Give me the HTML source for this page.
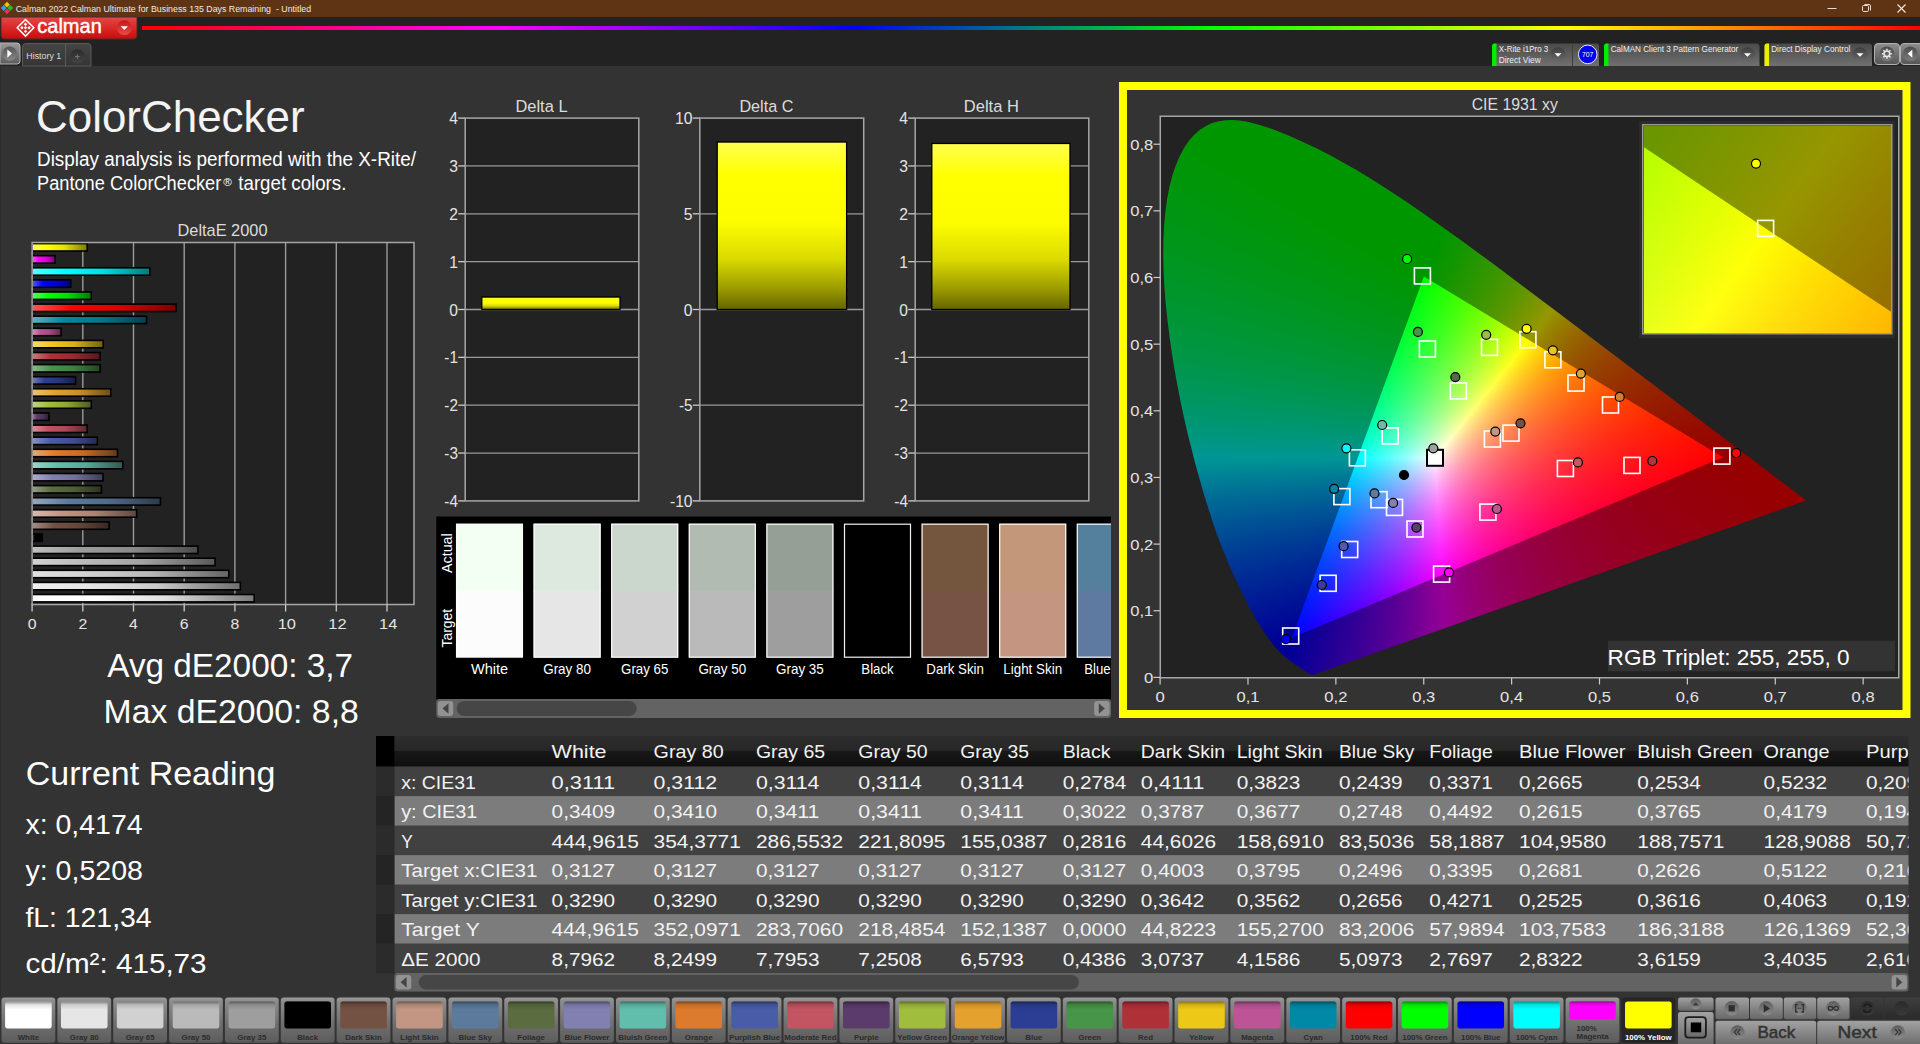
<!DOCTYPE html>
<html lang="en"><head><meta charset="utf-8"><title>Calman 2022 Calman Ultimate for Business - ColorChecker</title>
<style>
html,body{margin:0;padding:0}
body{width:1920px;height:1044px;overflow:hidden;background:#333;position:relative;font-family:"Liberation Sans",sans-serif}
#ov{position:absolute;left:0;top:0;font-family:"Liberation Sans",sans-serif}
text{white-space:pre}
.cr{background:conic-gradient(from 0deg at 130.96px 520.86px,#000000 0deg,#000000 20.1deg,#250000 23.8deg,#4a0000 27.1deg,#6f0000 30deg,#940000 32.6deg,#ba0000 34.9deg,#e00000 37deg,#ff0000 38.5deg,#ff0000 200deg,#000000 200.1deg,#000000 360deg),conic-gradient(from 0deg at 262.93px 159.57px,#000000 0deg,#000000 20deg,#ff0000 20.1deg,#ff0000 176.5deg,#cb0000 180.6deg,#940000 185.3deg,#5a0000 190.8deg,#180000 197.5deg,#000000 200.1deg,#000000 360deg)}
.cg{background:conic-gradient(from 0deg at 130.96px 520.86px,#00ff00 0deg,#00ff00 38.5deg,#00e100 40deg,#00c400 41.7deg,#00a800 43.6deg,#008d00 45.8deg,#007300 48.3deg,#005a00 51.2deg,#004100 54.6deg,#002800 58.7deg,#001000 63.6deg,#000000 67.4deg,#000000 247.2deg,#00ff00 247.3deg,#00ff00 360deg),conic-gradient(from 0deg at 562.05px 340.21px,#00ff00 0deg,#00ff00 67.2deg,#000000 67.3deg,#000000 247.3deg,#002500 251.9deg,#004900 255.9deg,#006d00 259.4deg,#009100 262.5deg,#00b600 265.3deg,#00dc00 267.8deg,#00ff00 269.9deg,#00ff00 360deg)}
.cb{background:conic-gradient(from 0deg at 262.93px 159.57px,#000000 0deg,#000001 121.4deg,#000020 134.7deg,#00003a 144deg,#000053 151.2deg,#00006b 157deg,#000083 161.8deg,#00009b 165.8deg,#0000b4 169.2deg,#0000ce 172.1deg,#0000e8 174.6deg,#0000ff 176.5deg,#0000ff 301.1deg,#000000 301.2deg,#000000 360deg),conic-gradient(from 0deg at 562.05px 340.21px,#000000 0deg,#000000 121.1deg,#0000ff 121.2deg,#0000fe 269.9deg,#0000e0 271.7deg,#0000c2 273.8deg,#0000a5 276.2deg,#000088 278.9deg,#00006d 282deg,#000052 285.6deg,#000036 289.9deg,#00001b 295deg,#000000 301.1deg,#000000 360deg)}
.cl{position:absolute;inset:0;mix-blend-mode:screen;background-blend-mode:darken}
.cw{position:absolute;isolation:isolate;background:#000;overflow:hidden}
.dim{position:absolute;inset:0;background:rgba(0,0,0,.412)}
.ir{background:conic-gradient(from 0deg at -1209.28px 1951.74px,#000000 0deg,#000000 18.3deg,#1f0000 21.3deg,#450000 24.5deg,#6b0000 27.4deg,#920000 30deg,#b90000 32.3deg,#e10000 34.4deg,#ff0000 35.8deg,#ff0000 198.3deg,#000000 198.4deg,#000000 360deg),conic-gradient(from 0deg at -466.78px -289.26px,#000000 0deg,#000000 18.3deg,#ff0000 18.4deg,#ff0000 176.8deg,#cb0000 180.5deg,#960000 184.7deg,#5e0000 189.5deg,#200000 195.2deg,#000000 198.3deg,#000000 360deg)}
.ig{background:conic-gradient(from 0deg at -1209.28px 1951.74px,#00ff00 0deg,#00ff00 35.8deg,#00df00 37.4deg,#00c200 39.1deg,#00a600 41deg,#008b00 43.2deg,#007100 45.7deg,#005800 48.6deg,#004000 52deg,#002800 56.1deg,#001100 61deg,#000000 65.3deg,#000000 245.2deg,#00ff00 245.3deg,#00ff00 360deg),conic-gradient(from 0deg at 1216.22px 831.24px,#00ff00 0deg,#00ff00 65.2deg,#000000 65.3deg,#000000 245.2deg,#002600 250.3deg,#004b00 254.8deg,#007000 258.7deg,#009500 262.1deg,#00ba00 265.1deg,#00df00 267.8deg,#00ff00 269.9deg,#00ff00 360deg)}
.ib{background:conic-gradient(from 0deg at -466.78px -289.26px,#000000 0deg,#000001 123.9deg,#00001c 136.1deg,#000035 144.9deg,#00004c 151.8deg,#000063 157.4deg,#00007b 162deg,#000092 165.8deg,#0000ab 169.1deg,#0000c4 171.9deg,#0000de 174.3deg,#0000f9 176.4deg,#0000ff 176.8deg,#0000ff 303.6deg,#000000 303.7deg,#000000 360deg),conic-gradient(from 0deg at 1216.22px 831.24px,#000000 0deg,#000000 123.6deg,#0000ff 123.7deg,#0000ff 269.8deg,#0000fd 270deg,#0000dd 272.1deg,#0000c0 274.4deg,#0000a2 277.1deg,#000085 280.2deg,#000069 283.7deg,#00004d 287.8deg,#000031 292.7deg,#000015 298.5deg,#000000 303.7deg,#000000 360deg)}
</style></head><body>
<div id="cieplot" style="position:absolute;left:1160px;top:116px;width:739px;height:562px;background:#222"></div>
<div class="cw" style="left:1161px;top:117px;width:738px;height:561px;clip-path:polygon(152.18px 557.68px,150.21px 557.73px,148.12px 556.72px,133.95px 547.25px,128.26px 543.18px,124.28px 540px,119.85px 535.98px,116.46px 532.44px,112.56px 527.92px,108.19px 522.33px,103.43px 515.62px,95.42px 502.9px,86.21px 486.06px,75.61px 464.45px,67.72px 446.98px,59.44px 426.71px,55.3px 415.5px,51.18px 403.6px,43.02px 377.68px,34.86px 348.92px,26.94px 317.74px,23.19px 301.46px,19.64px 284.88px,16.34px 268.12px,13.31px 251.26px,10.6px 234.37px,8.22px 217.51px,6.19px 200.77px,4.53px 184.28px,3.29px 168.19px,2.5px 152.58px,2.2px 137.49px,2.39px 122.89px,3.09px 108.79px,4.29px 95.26px,6.03px 82.4px,8.33px 70.31px,11.2px 59.09px,14.63px 48.77px,18.57px 39.39px,22.99px 31.05px,27.87px 23.8px,33.18px 17.72px,38.88px 12.79px,44.9px 8.93px,51.19px 6.07px,57.69px 4.17px,64.37px 3.15px,71.19px 2.95px,78.13px 3.49px,85.16px 4.62px,92.27px 6.24px,99.43px 8.23px,106.64px 10.53px,113.85px 13.1px,128.13px 18.81px,141.99px 24.93px,155.47px 31.32px,168.69px 38.05px,181.72px 45.13px,194.6px 52.51px,207.4px 60.2px,220.14px 68.18px,245.45px 84.82px,270.64px 102.23px,302.09px 124.76px,333.52px 147.86px,401.97px 199.15px,645.35px 383.49px)"><div class="cl cr"></div><div class="cl cg"></div><div class="cl cb"></div><div class="dim"></div></div>
<div class="cw" style="left:1161px;top:117px;width:738px;height:561px;clip-path:polygon(562.05px 340.21px,262.93px 159.57px,130.96px 520.86px)"><div class="cl cr"></div><div class="cl cg"></div><div class="cl cb"></div></div>
<div style="position:absolute;left:1639px;top:120.5px;width:255.5px;height:217px;background:#2c2c2c"></div>
<div class="cw" style="left:1643.5px;top:125.5px;width:247.5px;height:207.5px"><div class="cl ir"></div><div class="cl ig"></div><div class="cl ib"></div><div class="dim" style="clip-path:polygon(0px 0px,247.5px 0px,247.5px 186.3px,0px 21.52px)"></div></div>
<svg id="ov" width="1920" height="1044" viewBox="0 0 1920 1044">
<defs><linearGradient id="g1" x1="0" y1="0" x2="0" y2="1"><stop offset="0" stop-color="#e44848"/><stop offset="0.45" stop-color="#dc2a2a"/><stop offset="1" stop-color="#c60d0d"/></linearGradient><linearGradient id="g2" x1="0" y1="0" x2="0" y2="1"><stop offset="0" stop-color="#c41818"/><stop offset="1" stop-color="#e84a4a"/></linearGradient><linearGradient id="g3" x1="0" y1="0" x2="1" y2="0"><stop offset="0" stop-color="#f00"/><stop offset="0.2" stop-color="#f0f"/><stop offset="0.4" stop-color="#00f"/><stop offset="0.6" stop-color="#0f0"/><stop offset="0.8" stop-color="#ff0"/><stop offset="1" stop-color="#f00"/></linearGradient><linearGradient id="g4" x1="0" y1="0" x2="0" y2="1"><stop offset="0" stop-color="#9a9a9a"/><stop offset="1" stop-color="#5c5c5c"/></linearGradient><linearGradient id="g5" x1="0" y1="0" x2="0" y2="1"><stop offset="0" stop-color="#555"/><stop offset="1" stop-color="#888"/></linearGradient><linearGradient id="g6" x1="0" y1="0" x2="0" y2="1"><stop offset="0" stop-color="#454545"/><stop offset="1" stop-color="#353535"/></linearGradient><linearGradient id="g7" x1="0" y1="0" x2="0" y2="1"><stop offset="0" stop-color="#2c2c2c"/><stop offset="1" stop-color="#444"/></linearGradient><linearGradient id="g8" x1="0" y1="0" x2="0" y2="1"><stop offset="0" stop-color="#4a4a4a"/><stop offset="1" stop-color="#707070"/></linearGradient><linearGradient id="g9" x1="0" y1="0" x2="0" y2="1"><stop offset="0" stop-color="#3e3e3e"/><stop offset="1" stop-color="#6a6a6a"/></linearGradient><linearGradient id="g10" x1="0" y1="0" x2="0" y2="1"><stop offset="0" stop-color="#4a4a4a"/><stop offset="1" stop-color="#707070"/></linearGradient><linearGradient id="g11" x1="0" y1="0" x2="0" y2="1"><stop offset="0" stop-color="#3e3e3e"/><stop offset="1" stop-color="#6a6a6a"/></linearGradient><linearGradient id="g12" x1="0" y1="0" x2="0" y2="1"><stop offset="0" stop-color="#4a4a4a"/><stop offset="1" stop-color="#707070"/></linearGradient><linearGradient id="g13" x1="0" y1="0" x2="0" y2="1"><stop offset="0" stop-color="#3e3e3e"/><stop offset="1" stop-color="#6a6a6a"/></linearGradient><linearGradient id="g14" x1="0" y1="0" x2="0" y2="1"><stop offset="0" stop-color="#8e8e8e"/><stop offset="1" stop-color="#555"/></linearGradient><linearGradient id="g15" x1="0" y1="0" x2="0" y2="1"><stop offset="0" stop-color="#4c4c4c"/><stop offset="1" stop-color="#7c7c7c"/></linearGradient><linearGradient id="g16" x1="0" y1="0" x2="1" y2="0"><stop offset="0" stop-color="#ffff59"/><stop offset="0.28" stop-color="#ffff00"/><stop offset="0.6" stop-color="#e0e000"/><stop offset="1" stop-color="#7a7a00"/></linearGradient><linearGradient id="g17" x1="0" y1="0" x2="1" y2="0"><stop offset="0" stop-color="#ff59ff"/><stop offset="0.28" stop-color="#ff00ff"/><stop offset="0.6" stop-color="#e000e0"/><stop offset="1" stop-color="#7a007a"/></linearGradient><linearGradient id="g18" x1="0" y1="0" x2="1" y2="0"><stop offset="0" stop-color="#59ffff"/><stop offset="0.28" stop-color="#00ffff"/><stop offset="0.6" stop-color="#00e0e0"/><stop offset="1" stop-color="#007a7a"/></linearGradient><linearGradient id="g19" x1="0" y1="0" x2="1" y2="0"><stop offset="0" stop-color="#5959ff"/><stop offset="0.28" stop-color="#0000ff"/><stop offset="0.6" stop-color="#0000e0"/><stop offset="1" stop-color="#00007a"/></linearGradient><linearGradient id="g20" x1="0" y1="0" x2="1" y2="0"><stop offset="0" stop-color="#59ff59"/><stop offset="0.28" stop-color="#00ff00"/><stop offset="0.6" stop-color="#00e000"/><stop offset="1" stop-color="#007a00"/></linearGradient><linearGradient id="g21" x1="0" y1="0" x2="1" y2="0"><stop offset="0" stop-color="#ff5959"/><stop offset="0.28" stop-color="#ff0000"/><stop offset="0.6" stop-color="#e00000"/><stop offset="1" stop-color="#7a0000"/></linearGradient><linearGradient id="g22" x1="0" y1="0" x2="1" y2="0"><stop offset="0" stop-color="#5eb0c2"/><stop offset="0.28" stop-color="#0885a1"/><stop offset="0.6" stop-color="#07758e"/><stop offset="1" stop-color="#04404d"/></linearGradient><linearGradient id="g23" x1="0" y1="0" x2="1" y2="0"><stop offset="0" stop-color="#d391ba"/><stop offset="0.28" stop-color="#bb5695"/><stop offset="0.6" stop-color="#a54c83"/><stop offset="1" stop-color="#5a2948"/></linearGradient><linearGradient id="g24" x1="0" y1="0" x2="1" y2="0"><stop offset="0" stop-color="#f4db6d"/><stop offset="0.28" stop-color="#eec81f"/><stop offset="0.6" stop-color="#d1b01b"/><stop offset="1" stop-color="#72600f"/></linearGradient><linearGradient id="g25" x1="0" y1="0" x2="1" y2="0"><stop offset="0" stop-color="#cc787e"/><stop offset="0.28" stop-color="#b03038"/><stop offset="0.6" stop-color="#9b2a31"/><stop offset="1" stop-color="#54171b"/></linearGradient><linearGradient id="g26" x1="0" y1="0" x2="1" y2="0"><stop offset="0" stop-color="#87b989"/><stop offset="0.28" stop-color="#469449"/><stop offset="0.6" stop-color="#3e8240"/><stop offset="1" stop-color="#224723"/></linearGradient><linearGradient id="g27" x1="0" y1="0" x2="1" y2="0"><stop offset="0" stop-color="#7582b9"/><stop offset="0.28" stop-color="#2b3e93"/><stop offset="0.6" stop-color="#263781"/><stop offset="1" stop-color="#151e47"/></linearGradient><linearGradient id="g28" x1="0" y1="0" x2="1" y2="0"><stop offset="0" stop-color="#eec277"/><stop offset="0.28" stop-color="#e5a12e"/><stop offset="0.6" stop-color="#ca8e28"/><stop offset="1" stop-color="#6e4d16"/></linearGradient><linearGradient id="g29" x1="0" y1="0" x2="1" y2="0"><stop offset="0" stop-color="#c1d482"/><stop offset="0.28" stop-color="#a0bd3e"/><stop offset="0.6" stop-color="#8da637"/><stop offset="1" stop-color="#4d5b1e"/></linearGradient><linearGradient id="g30" x1="0" y1="0" x2="1" y2="0"><stop offset="0" stop-color="#94809f"/><stop offset="0.28" stop-color="#5b3b6b"/><stop offset="0.6" stop-color="#50345e"/><stop offset="1" stop-color="#2c1c33"/></linearGradient><linearGradient id="g31" x1="0" y1="0" x2="1" y2="0"><stop offset="0" stop-color="#d89099"/><stop offset="0.28" stop-color="#c35462"/><stop offset="0.6" stop-color="#ac4a56"/><stop offset="1" stop-color="#5e282f"/></linearGradient><linearGradient id="g32" x1="0" y1="0" x2="1" y2="0"><stop offset="0" stop-color="#8895c6"/><stop offset="0.28" stop-color="#485ca8"/><stop offset="0.6" stop-color="#3f5194"/><stop offset="1" stop-color="#232c51"/></linearGradient><linearGradient id="g33" x1="0" y1="0" x2="1" y2="0"><stop offset="0" stop-color="#e8a976"/><stop offset="0.28" stop-color="#dc7b2d"/><stop offset="0.6" stop-color="#c26c28"/><stop offset="1" stop-color="#6a3b16"/></linearGradient><linearGradient id="g34" x1="0" y1="0" x2="1" y2="0"><stop offset="0" stop-color="#99d5c9"/><stop offset="0.28" stop-color="#62beac"/><stop offset="0.6" stop-color="#56a797"/><stop offset="1" stop-color="#2f5b53"/></linearGradient><linearGradient id="g35" x1="0" y1="0" x2="1" y2="0"><stop offset="0" stop-color="#aeaccc"/><stop offset="0.28" stop-color="#8280b0"/><stop offset="0.6" stop-color="#72719b"/><stop offset="1" stop-color="#3e3d54"/></linearGradient><linearGradient id="g36" x1="0" y1="0" x2="1" y2="0"><stop offset="0" stop-color="#949f83"/><stop offset="0.28" stop-color="#5a6c40"/><stop offset="0.6" stop-color="#4f5f38"/><stop offset="1" stop-color="#2b341f"/></linearGradient><linearGradient id="g37" x1="0" y1="0" x2="1" y2="0"><stop offset="0" stop-color="#94a9bf"/><stop offset="0.28" stop-color="#5b7a9c"/><stop offset="0.6" stop-color="#506b89"/><stop offset="1" stop-color="#2c3b4b"/></linearGradient><linearGradient id="g38" x1="0" y1="0" x2="1" y2="0"><stop offset="0" stop-color="#d7bbae"/><stop offset="0.28" stop-color="#c29682"/><stop offset="0.6" stop-color="#ab8472"/><stop offset="1" stop-color="#5d483e"/></linearGradient><linearGradient id="g39" x1="0" y1="0" x2="1" y2="0"><stop offset="0" stop-color="#a48f85"/><stop offset="0.28" stop-color="#735244"/><stop offset="0.6" stop-color="#65483c"/><stop offset="1" stop-color="#372721"/></linearGradient><linearGradient id="g40" x1="0" y1="0" x2="1" y2="0"><stop offset="0" stop-color="#595959"/><stop offset="0.28" stop-color="#000000"/><stop offset="0.6" stop-color="#000000"/><stop offset="1" stop-color="#000000"/></linearGradient><linearGradient id="g41" x1="0" y1="0" x2="1" y2="0"><stop offset="0" stop-color="#c0c0c0"/><stop offset="0.28" stop-color="#9e9e9e"/><stop offset="0.6" stop-color="#8b8b8b"/><stop offset="1" stop-color="#4c4c4c"/></linearGradient><linearGradient id="g42" x1="0" y1="0" x2="1" y2="0"><stop offset="0" stop-color="#d2d2d2"/><stop offset="0.28" stop-color="#bababa"/><stop offset="0.6" stop-color="#a4a4a4"/><stop offset="1" stop-color="#595959"/></linearGradient><linearGradient id="g43" x1="0" y1="0" x2="1" y2="0"><stop offset="0" stop-color="#e1e1e1"/><stop offset="0.28" stop-color="#d1d1d1"/><stop offset="0.6" stop-color="#b8b8b8"/><stop offset="1" stop-color="#646464"/></linearGradient><linearGradient id="g44" x1="0" y1="0" x2="1" y2="0"><stop offset="0" stop-color="#efefef"/><stop offset="0.28" stop-color="#e6e6e6"/><stop offset="0.6" stop-color="#cacaca"/><stop offset="1" stop-color="#6e6e6e"/></linearGradient><linearGradient id="g45" x1="0" y1="0" x2="1" y2="0"><stop offset="0" stop-color="#ffffff"/><stop offset="0.28" stop-color="#ffffff"/><stop offset="0.6" stop-color="#e0e0e0"/><stop offset="1" stop-color="#7a7a7a"/></linearGradient><linearGradient id="g46" x1="0" y1="0" x2="0" y2="1"><stop offset="0" stop-color="#ffff50"/><stop offset="0.2" stop-color="#ffff00"/><stop offset="0.48" stop-color="#fdfd00"/><stop offset="0.7" stop-color="#dada00"/><stop offset="0.88" stop-color="#999900"/><stop offset="1" stop-color="#646400"/></linearGradient><linearGradient id="g47" x1="0" y1="0" x2="0" y2="1"><stop offset="0" stop-color="#ffff50"/><stop offset="0.2" stop-color="#ffff00"/><stop offset="0.48" stop-color="#fdfd00"/><stop offset="0.7" stop-color="#dada00"/><stop offset="0.88" stop-color="#999900"/><stop offset="1" stop-color="#646400"/></linearGradient><linearGradient id="g48" x1="0" y1="0" x2="0" y2="1"><stop offset="0" stop-color="#ffff50"/><stop offset="0.2" stop-color="#ffff00"/><stop offset="0.48" stop-color="#fdfd00"/><stop offset="0.7" stop-color="#dada00"/><stop offset="0.88" stop-color="#999900"/><stop offset="1" stop-color="#646400"/></linearGradient><linearGradient id="g49" x1="0" y1="0" x2="0" y2="1"><stop offset="0" stop-color="#2e2e2e"/><stop offset="0.5" stop-color="#262626"/><stop offset="0.5" stop-color="#181818"/><stop offset="1" stop-color="#0e0e0e"/></linearGradient><linearGradient id="g50" x1="0" y1="0" x2="0" y2="1"><stop offset="0" stop-color="#9c9c9c"/><stop offset="0.08" stop-color="#8c8c8c"/><stop offset="0.6" stop-color="#6e6e6e"/><stop offset="1" stop-color="#5c5c5c"/></linearGradient><linearGradient id="g51" x1="0" y1="0" x2="0" y2="1"><stop offset="0" stop-color="#000" stop-opacity="0.45"/><stop offset="0.12" stop-color="#000" stop-opacity="0.12"/><stop offset="0.3" stop-color="#000" stop-opacity="0"/></linearGradient><linearGradient id="g52" x1="0" y1="0" x2="0" y2="1"><stop offset="0" stop-color="#a2a2a2"/><stop offset="1" stop-color="#686868"/></linearGradient><linearGradient id="g53" x1="0" y1="0" x2="0" y2="1"><stop offset="0" stop-color="#3e3e3e"/><stop offset="1" stop-color="#2a2a2a"/></linearGradient><linearGradient id="g54" x1="0" y1="0" x2="0" y2="1"><stop offset="0" stop-color="#5e5e5e"/><stop offset="1" stop-color="#8a8a8a"/></linearGradient><linearGradient id="g55" x1="0" y1="0" x2="0" y2="1"><stop offset="0" stop-color="#2a2a2a"/><stop offset="1" stop-color="#3a3a3a"/></linearGradient></defs>
<rect x="0" y="0" width="1920" height="17" fill="#5e3414"/>
<g transform="translate(7,8)"><path d="M0-6.2 2.9-3.3 0-.4-2.9-3.3z" fill="#f2c500"/><path d="M-6.2 0-3.3-2.9-.4 0-3.3 2.9z" fill="#2aa6e8"/><path d="M6.2 0 3.3-2.9 .4 0 3.3 2.9z" fill="#1fc12a"/><path d="M0 6.2 2.9 3.3 0 .4-2.9 3.3z" fill="#e8306a"/></g>
<text x="15.7" y="11.8" font-size="9.6" fill="#f1e9e2" textLength="295.5" lengthAdjust="spacingAndGlyphs">Calman 2022 Calman Ultimate for Business 135 Days Remaining  - Untitled</text>
<line x1="1827.5" y1="8.5" x2="1836.5" y2="8.5" stroke="#e6ddd6" stroke-width="1"/>
<rect x="1862.5" y="5.5" width="6" height="6" rx="1.2" fill="none" stroke="#e6ddd6"/><path d="M1864.5 4.5h4.5a1.5 1.5 0 0 1 1.5 1.5v4.5" fill="none" stroke="#e6ddd6"/>
<path d="M1897.5 4.5l8 8m0-8l-8 8" stroke="#f1e9e2" stroke-width="1.1" fill="none"/>
<rect x="0" y="17" width="1920" height="49" fill="#222"/>
<rect x="0" y="66" width="1" height="930" fill="#2c2c2c"/>
<path d="M1 17h136v18.5a3.5 3.5 0 0 1-3.5 3.5h-129a3.5 3.5 0 0 1-3.5-3.5z" fill="url(#g1)" stroke="#4a2a2a" stroke-width="1"/>
<g transform="translate(25.5,27.8)" fill="none" stroke="#fff" stroke-width="1.5"><path d="M0-8.3 8.3 0 0 8.3-8.3 0z"/></g><g transform="translate(25.5,27.8)" fill="#fff"><path d="M0 -5.3 l1.7 1.7 -1.7 1.7 -1.7 -1.7z"/><path d="M-3.6 -1.7 l1.7 1.7 -1.7 1.7 -1.7 -1.7z"/><path d="M3.6 -1.7 l1.7 1.7 -1.7 1.7 -1.7 -1.7z"/><path d="M0 1.9 l1.7 1.7 -1.7 1.7 -1.7 -1.7z"/><path d="M0 -1.7 l1.7 1.7 -1.7 1.7 -1.7 -1.7z"/></g>
<text x="37.3" y="33.3" font-size="20.2" fill="#fff" textLength="64.5" lengthAdjust="spacingAndGlyphs" stroke="#fff" stroke-width=".45">calman</text>
<circle cx="124.3" cy="27.7" r="7.4" fill="url(#g2)"/><path d="M120.6 26.2h7.4l-3.7 3.9z" fill="#fff"/>
<rect x="142" y="26" width="1778" height="4" fill="url(#g3)"/>
<path d="M0 43h17a3 3 0 0 1 3 3v15a3 3 0 0 1-3 3h-17z" fill="url(#g4)" stroke="#b4b4b4" stroke-width="1"/>
<circle cx="9.6" cy="53.6" r="7.2" fill="url(#g5)"/><path d="M7.3 49.4v8.4l4.6-4.2z" fill="#fff"/>
<path d="M22.5 66v-19.5a3 3 0 0 1 3-3h62.5a3 3 0 0 1 3 3v19.5z" fill="url(#g6)" stroke="#5a5a5a" stroke-width="1"/>
<line x1="65.5" y1="44" x2="65.5" y2="66" stroke="#5a5a5a" stroke-width="1"/>
<text x="26.3" y="58.6" font-size="9.2" fill="#dcdcdc" textLength="35" lengthAdjust="spacingAndGlyphs">History 1</text>
<circle cx="77.4" cy="56.4" r="7.2" fill="url(#g7)"/><path d="M75 56.6h4.6m-2.3-2.3v4.6" stroke="#7a7a7a" stroke-width="1" fill="none"/>
<path d="M1492 66v-19.5a3 3 0 0 1 3-3h101a3 3 0 0 1 3 3v19.5z" fill="url(#g8)"/>
<path d="M1492 66v-20a2.5 2.5 0 0 1 2.5-2.5h2v22.5z" fill="#0e0"/>
<text x="1498.7" y="52" font-size="8.4" fill="#f0f0f0" textLength="49.5" lengthAdjust="spacingAndGlyphs">X-Rite i1Pro 3</text>
<text x="1498.7" y="63" font-size="8.4" fill="#f0f0f0" textLength="42" lengthAdjust="spacingAndGlyphs">Direct View</text>
<circle cx="1558" cy="54.6" r="7.4" fill="url(#g9)"/><path d="M1554.5 53.2h7l-3.5 3.6z" fill="#fff"/>
<line x1="1572.5" y1="45" x2="1572.5" y2="66" stroke="#3c3c3c" stroke-width="1"/>
<circle cx="1587.7" cy="54.4" r="9.3" fill="#0000f0" stroke="#e8e8ff" stroke-width="1"/>
<text x="1587.7" y="57.4" font-size="8" fill="#fff" text-anchor="middle" textLength="11.5" lengthAdjust="spacingAndGlyphs">707</text>
<path d="M1604 66v-19.5a3 3 0 0 1 3-3h149.5a3 3 0 0 1 3 3v19.5z" fill="url(#g10)"/>
<path d="M1604 66v-20a2.5 2.5 0 0 1 2.5-2.5h2v22.5z" fill="#0e0"/>
<text x="1610.7" y="52" font-size="8.4" fill="#f0f0f0" textLength="127.5" lengthAdjust="spacingAndGlyphs">CalMAN Client 3 Pattern Generator</text>
<circle cx="1747.5" cy="54.6" r="7.4" fill="url(#g11)"/><path d="M1744 53.2h7l-3.5 3.6z" fill="#fff"/>
<path d="M1764.5 66v-19.5a3 3 0 0 1 3-3h101.5a3 3 0 0 1 3 3v19.5z" fill="url(#g12)"/>
<path d="M1764.5 66v-20a2.5 2.5 0 0 1 2.5-2.5h2v22.5z" fill="#ee0"/>
<text x="1771.2" y="52" font-size="8.4" fill="#f0f0f0" textLength="79.2" lengthAdjust="spacingAndGlyphs">Direct Display Control</text>
<circle cx="1860" cy="54.6" r="7.4" fill="url(#g13)"/><path d="M1856.5 53.2h7l-3.5 3.6z" fill="#fff"/>
<rect x="1874.5" y="43.5" width="25" height="21" rx="3.5" fill="url(#g14)" stroke="#b0b0b0"/>
<rect x="1900.5" y="43.5" width="25" height="21" rx="3.5" fill="url(#g14)" stroke="#b0b0b0"/>
<circle cx="1886.9" cy="53.8" r="7.4" fill="url(#g15)"/><circle cx="1910.4" cy="53.8" r="7.4" fill="url(#g15)"/>
<g stroke="#e8e8e8" stroke-width="1.6"><line x1="1890.1" y1="53.8" x2="1891.9" y2="53.8"/><line x1="1889.16" y1="56.06" x2="1890.44" y2="57.34"/><line x1="1886.9" y1="57" x2="1886.9" y2="58.8"/><line x1="1884.64" y1="56.06" x2="1883.36" y2="57.34"/><line x1="1883.7" y1="53.8" x2="1881.9" y2="53.8"/><line x1="1884.64" y1="51.54" x2="1883.36" y2="50.26"/><line x1="1886.9" y1="50.6" x2="1886.9" y2="48.8"/><line x1="1889.16" y1="51.54" x2="1890.44" y2="50.26"/></g><circle cx="1886.9" cy="53.8" r="2.8" fill="none" stroke="#e8e8e8" stroke-width="1.5"/>
<path d="M1912.3 49.8v8l-4.6-4z" fill="#fff"/>
<rect x="1123" y="86" width="783.5" height="628" fill="none" stroke="#ff0" stroke-width="8"/>
<rect x="1160.25" y="116.25" width="738.5" height="561.5" fill="none" stroke="#a6a6a6" stroke-width="1.5"/>
<text x="1514.8" y="110.4" font-size="16.6" fill="#dcdcdc" text-anchor="middle" textLength="86.2" lengthAdjust="spacingAndGlyphs">CIE 1931 xy</text>
<line x1="1153.5" y1="677.4" x2="1160" y2="677.4" stroke="#ccc" stroke-width="1.2"/>
<line x1="1160.1" y1="678" x2="1160.1" y2="684.5" stroke="#ccc" stroke-width="1.2"/>
<text x="1153.3" y="683" font-size="14.6" fill="#e4e4e4" text-anchor="end" textLength="9.3" lengthAdjust="spacingAndGlyphs">0</text>
<text x="1160.1" y="702" font-size="14.6" fill="#e4e4e4" text-anchor="middle" textLength="9.3" lengthAdjust="spacingAndGlyphs">0</text>
<line x1="1153.5" y1="610.75" x2="1160" y2="610.75" stroke="#ccc" stroke-width="1.2"/>
<line x1="1247.98" y1="678" x2="1247.98" y2="684.5" stroke="#ccc" stroke-width="1.2"/>
<text x="1153.3" y="616.35" font-size="14.6" fill="#e4e4e4" text-anchor="end" textLength="23" lengthAdjust="spacingAndGlyphs">0,1</text>
<text x="1247.98" y="702" font-size="14.6" fill="#e4e4e4" text-anchor="middle" textLength="23" lengthAdjust="spacingAndGlyphs">0,1</text>
<line x1="1153.5" y1="544.1" x2="1160" y2="544.1" stroke="#ccc" stroke-width="1.2"/>
<line x1="1335.86" y1="678" x2="1335.86" y2="684.5" stroke="#ccc" stroke-width="1.2"/>
<text x="1153.3" y="549.7" font-size="14.6" fill="#e4e4e4" text-anchor="end" textLength="23" lengthAdjust="spacingAndGlyphs">0,2</text>
<text x="1335.86" y="702" font-size="14.6" fill="#e4e4e4" text-anchor="middle" textLength="23" lengthAdjust="spacingAndGlyphs">0,2</text>
<line x1="1153.5" y1="477.45" x2="1160" y2="477.45" stroke="#ccc" stroke-width="1.2"/>
<line x1="1423.74" y1="678" x2="1423.74" y2="684.5" stroke="#ccc" stroke-width="1.2"/>
<text x="1153.3" y="483.05" font-size="14.6" fill="#e4e4e4" text-anchor="end" textLength="23" lengthAdjust="spacingAndGlyphs">0,3</text>
<text x="1423.74" y="702" font-size="14.6" fill="#e4e4e4" text-anchor="middle" textLength="23" lengthAdjust="spacingAndGlyphs">0,3</text>
<line x1="1153.5" y1="410.8" x2="1160" y2="410.8" stroke="#ccc" stroke-width="1.2"/>
<line x1="1511.62" y1="678" x2="1511.62" y2="684.5" stroke="#ccc" stroke-width="1.2"/>
<text x="1153.3" y="416.4" font-size="14.6" fill="#e4e4e4" text-anchor="end" textLength="23" lengthAdjust="spacingAndGlyphs">0,4</text>
<text x="1511.62" y="702" font-size="14.6" fill="#e4e4e4" text-anchor="middle" textLength="23" lengthAdjust="spacingAndGlyphs">0,4</text>
<line x1="1153.5" y1="344.15" x2="1160" y2="344.15" stroke="#ccc" stroke-width="1.2"/>
<line x1="1599.5" y1="678" x2="1599.5" y2="684.5" stroke="#ccc" stroke-width="1.2"/>
<text x="1153.3" y="349.75" font-size="14.6" fill="#e4e4e4" text-anchor="end" textLength="23" lengthAdjust="spacingAndGlyphs">0,5</text>
<text x="1599.5" y="702" font-size="14.6" fill="#e4e4e4" text-anchor="middle" textLength="23" lengthAdjust="spacingAndGlyphs">0,5</text>
<line x1="1153.5" y1="277.5" x2="1160" y2="277.5" stroke="#ccc" stroke-width="1.2"/>
<line x1="1687.38" y1="678" x2="1687.38" y2="684.5" stroke="#ccc" stroke-width="1.2"/>
<text x="1153.3" y="283.1" font-size="14.6" fill="#e4e4e4" text-anchor="end" textLength="23" lengthAdjust="spacingAndGlyphs">0,6</text>
<text x="1687.38" y="702" font-size="14.6" fill="#e4e4e4" text-anchor="middle" textLength="23" lengthAdjust="spacingAndGlyphs">0,6</text>
<line x1="1153.5" y1="210.85" x2="1160" y2="210.85" stroke="#ccc" stroke-width="1.2"/>
<line x1="1775.26" y1="678" x2="1775.26" y2="684.5" stroke="#ccc" stroke-width="1.2"/>
<text x="1153.3" y="216.45" font-size="14.6" fill="#e4e4e4" text-anchor="end" textLength="23" lengthAdjust="spacingAndGlyphs">0,7</text>
<text x="1775.26" y="702" font-size="14.6" fill="#e4e4e4" text-anchor="middle" textLength="23" lengthAdjust="spacingAndGlyphs">0,7</text>
<line x1="1153.5" y1="144.2" x2="1160" y2="144.2" stroke="#ccc" stroke-width="1.2"/>
<line x1="1863.14" y1="678" x2="1863.14" y2="684.5" stroke="#ccc" stroke-width="1.2"/>
<text x="1153.3" y="149.8" font-size="14.6" fill="#e4e4e4" text-anchor="end" textLength="23" lengthAdjust="spacingAndGlyphs">0,8</text>
<text x="1863.14" y="702" font-size="14.6" fill="#e4e4e4" text-anchor="middle" textLength="23" lengthAdjust="spacingAndGlyphs">0,8</text>
<rect x="1608" y="640.8" width="287" height="30.5" fill="#333"/>
<text x="1607.6" y="664.5" font-size="22.2" fill="#fff" textLength="242" lengthAdjust="spacingAndGlyphs">RGB Triplet: 255, 255, 0</text>
<rect x="1642.75" y="124.75" width="249" height="209" fill="none" stroke="#9a9a9a" stroke-width="1.5"/>
<g fill="none" stroke="#fff" stroke-width="1.6"><rect x="1414.4" y="267.9" width="16" height="16"/><rect x="1419.4" y="341" width="16" height="16"/><rect x="1481.5" y="339.4" width="16" height="16"/><rect x="1519.9" y="331.7" width="16" height="16"/><rect x="1544.9" y="351.8" width="16" height="16"/><rect x="1568" y="375.1" width="16" height="16"/><rect x="1602.5" y="397" width="16" height="16"/><rect x="1450.4" y="382.9" width="16" height="16"/><rect x="1382.2" y="427.9" width="16" height="16"/><rect x="1349.4" y="449.8" width="16" height="16"/><rect x="1333.9" y="488.6" width="16" height="16"/><rect x="1371" y="491.7" width="16" height="16"/><rect x="1386.5" y="499.4" width="16" height="16"/><rect x="1407" y="521" width="16" height="16"/><rect x="1341.7" y="541.5" width="16" height="16"/><rect x="1484.4" y="431" width="16" height="16"/><rect x="1503" y="425.1" width="16" height="16"/><rect x="1479.9" y="504.1" width="16" height="16"/><rect x="1433.6" y="566.1" width="16" height="16"/><rect x="1320.1" y="575.3" width="16" height="16"/><rect x="1282.7" y="628" width="16" height="16"/><rect x="1557.4" y="460.5" width="16" height="16"/><rect x="1624" y="457.4" width="16" height="16"/><rect x="1713.9" y="448.1" width="16" height="16"/></g><rect x="1427" y="449.8" width="16" height="16" fill="#fff" fill-opacity=".85" stroke="#000" stroke-width="2"/><g stroke="#000" stroke-width="1.2"><circle cx="1407.1" cy="259" r="4.5" fill="#00ff00"/><circle cx="1417.9" cy="331.9" r="4.5" fill="#469449"/><circle cx="1486.2" cy="334.8" r="4.5" fill="#9dbc40"/><circle cx="1526.6" cy="328.8" r="4.5" fill="#ffff00"/><circle cx="1552.9" cy="350.3" r="4.5" fill="#e7c71f"/><circle cx="1580.9" cy="373.6" r="4.5" fill="#e0a32e"/><circle cx="1619.7" cy="396.9" r="4.5" fill="#d67e2c"/><circle cx="1455.3" cy="377.1" r="4.5" fill="#576c43"/><circle cx="1382.2" cy="425" r="4.5" fill="#67bdaa"/><circle cx="1346.4" cy="448.3" r="4.5" fill="#00ffff"/><circle cx="1334.1" cy="488.8" r="4.5" fill="#0885a1"/><circle cx="1374.5" cy="493.4" r="4.5" fill="#627a9d"/><circle cx="1393.1" cy="502.9" r="4.5" fill="#8580b1"/><circle cx="1416.4" cy="527.6" r="4.5" fill="#5e3c6c"/><circle cx="1343.6" cy="546.2" r="4.5" fill="#505ba6"/><circle cx="1495.3" cy="431.6" r="4.5" fill="#c29682"/><circle cx="1520.5" cy="423.3" r="4.5" fill="#735244"/><circle cx="1496.9" cy="509" r="4.5" fill="#bb5695"/><circle cx="1449" cy="572.4" r="4.5" fill="#ff00ff"/><circle cx="1321.8" cy="585" r="4.5" fill="#383d96"/><circle cx="1285.9" cy="639.1" r="4.5" fill="#0000ff"/><circle cx="1577.9" cy="462.4" r="4.5" fill="#c15a63"/><circle cx="1652.3" cy="461" r="4.5" fill="#af363c"/><circle cx="1736.2" cy="453" r="4.5" fill="#ff0000"/><circle cx="1404" cy="475" r="4.5" fill="#000"/><circle cx="1433.3" cy="448.3" r="4.5" fill="#a0a0a0"/><rect x="1757.6" y="220.4" width="16" height="16" fill="none" stroke="#fff" stroke-width="1.6"/><circle cx="1756" cy="163.6" r="4.5" fill="#ffff00"/></g>
<text x="36" y="132" font-size="44.5" fill="#f4f4f4" textLength="268.6" lengthAdjust="spacingAndGlyphs">ColorChecker</text>
<text x="37" y="165.5" font-size="20" fill="#fff" textLength="379" lengthAdjust="spacingAndGlyphs">Display analysis is performed with the X-Rite/</text>
<text x="37" y="190" font-size="20" fill="#fff" textLength="184.3" lengthAdjust="spacingAndGlyphs">Pantone ColorChecker</text>
<text x="223.3" y="185.6" font-size="10.5" fill="#fff" textLength="8.6" lengthAdjust="spacingAndGlyphs">®</text>
<text x="238.3" y="190" font-size="20" fill="#fff" textLength="108.1" lengthAdjust="spacingAndGlyphs">target colors.</text>
<text x="222.5" y="236.3" font-size="16.6" fill="#dcdcdc" text-anchor="middle" textLength="90" lengthAdjust="spacingAndGlyphs">DeltaE 2000</text>
<rect x="32.1" y="242.4" width="381.9" height="362.2" fill="#222"/>
<line x1="82.8" y1="242.4" x2="82.8" y2="604.6" stroke="#9a9a9a" stroke-width="1.4"/>
<line x1="133.5" y1="242.4" x2="133.5" y2="604.6" stroke="#9a9a9a" stroke-width="1.4"/>
<line x1="184.2" y1="242.4" x2="184.2" y2="604.6" stroke="#9a9a9a" stroke-width="1.4"/>
<line x1="234.9" y1="242.4" x2="234.9" y2="604.6" stroke="#9a9a9a" stroke-width="1.4"/>
<line x1="285.6" y1="242.4" x2="285.6" y2="604.6" stroke="#9a9a9a" stroke-width="1.4"/>
<line x1="336.3" y1="242.4" x2="336.3" y2="604.6" stroke="#9a9a9a" stroke-width="1.4"/>
<line x1="387" y1="242.4" x2="387" y2="604.6" stroke="#9a9a9a" stroke-width="1.4"/>
<rect x="32.1" y="243.6" width="55.12" height="7.4" fill="url(#g16)" stroke="#000" stroke-width="1.6"/>
<rect x="32.1" y="255.7" width="22.93" height="7.4" fill="url(#g17)" stroke="#000" stroke-width="1.6"/>
<rect x="32.1" y="267.8" width="117.74" height="7.4" fill="url(#g18)" stroke="#000" stroke-width="1.6"/>
<rect x="32.1" y="279.9" width="38.65" height="7.4" fill="url(#g19)" stroke="#000" stroke-width="1.6"/>
<rect x="32.1" y="292" width="59.18" height="7.4" fill="url(#g20)" stroke="#000" stroke-width="1.6"/>
<rect x="32.1" y="304.1" width="143.85" height="7.4" fill="url(#g21)" stroke="#000" stroke-width="1.6"/>
<rect x="32.1" y="316.2" width="114.44" height="7.4" fill="url(#g22)" stroke="#000" stroke-width="1.6"/>
<rect x="32.1" y="328.3" width="29.01" height="7.4" fill="url(#g23)" stroke="#000" stroke-width="1.6"/>
<rect x="32.1" y="340.4" width="71.09" height="7.4" fill="url(#g24)" stroke="#000" stroke-width="1.6"/>
<rect x="32.1" y="352.5" width="68.05" height="7.4" fill="url(#g25)" stroke="#000" stroke-width="1.6"/>
<rect x="32.1" y="364.6" width="68.05" height="7.4" fill="url(#g26)" stroke="#000" stroke-width="1.6"/>
<rect x="32.1" y="376.7" width="43.46" height="7.4" fill="url(#g27)" stroke="#000" stroke-width="1.6"/>
<rect x="32.1" y="388.8" width="78.7" height="7.4" fill="url(#g28)" stroke="#000" stroke-width="1.6"/>
<rect x="32.1" y="400.9" width="59.18" height="7.4" fill="url(#g29)" stroke="#000" stroke-width="1.6"/>
<rect x="32.1" y="413" width="16.85" height="7.4" fill="url(#g30)" stroke="#000" stroke-width="1.6"/>
<rect x="32.1" y="425.1" width="55.12" height="7.4" fill="url(#g31)" stroke="#000" stroke-width="1.6"/>
<rect x="32.1" y="437.2" width="65.26" height="7.4" fill="url(#g32)" stroke="#000" stroke-width="1.6"/>
<rect x="32.1" y="449.3" width="85.38" height="7.4" fill="url(#g33)" stroke="#000" stroke-width="1.6"/>
<rect x="32.1" y="461.4" width="90.76" height="7.4" fill="url(#g34)" stroke="#000" stroke-width="1.6"/>
<rect x="32.1" y="473.5" width="70.9" height="7.4" fill="url(#g35)" stroke="#000" stroke-width="1.6"/>
<rect x="32.1" y="485.6" width="69.31" height="7.4" fill="url(#g36)" stroke="#000" stroke-width="1.6"/>
<rect x="32.1" y="497.7" width="128.32" height="7.4" fill="url(#g37)" stroke="#000" stroke-width="1.6"/>
<rect x="32.1" y="509.8" width="104.52" height="7.4" fill="url(#g38)" stroke="#000" stroke-width="1.6"/>
<rect x="32.1" y="521.9" width="77.02" height="7.4" fill="url(#g39)" stroke="#000" stroke-width="1.6"/>
<rect x="32.1" y="534" width="10.22" height="7.4" fill="url(#g40)" stroke="#000" stroke-width="1.6"/>
<rect x="32.1" y="546.1" width="165.89" height="7.4" fill="url(#g41)" stroke="#000" stroke-width="1.6"/>
<rect x="32.1" y="558.2" width="182.91" height="7.4" fill="url(#g42)" stroke="#000" stroke-width="1.6"/>
<rect x="32.1" y="570.3" width="196.71" height="7.4" fill="url(#g43)" stroke="#000" stroke-width="1.6"/>
<rect x="32.1" y="582.4" width="208.23" height="7.4" fill="url(#g44)" stroke="#000" stroke-width="1.6"/>
<rect x="32.1" y="594.5" width="222.08" height="7.4" fill="url(#g45)" stroke="#000" stroke-width="1.6"/>
<path d="M414 604.6V242.4H32.1V604.6" fill="none" stroke="#a6a6a6" stroke-width="1.5"/>
<line x1="31.4" y1="604.6" x2="414.7" y2="604.6" stroke="#a6a6a6" stroke-width="1.5"/>
<line x1="32.1" y1="604.6" x2="32.1" y2="611.5" stroke="#ccc" stroke-width="1.3"/>
<text x="32.1" y="629.3" font-size="15.5" fill="#e4e4e4" text-anchor="middle" textLength="8.8" lengthAdjust="spacingAndGlyphs">0</text>
<line x1="82.8" y1="604.6" x2="82.8" y2="611.5" stroke="#ccc" stroke-width="1.3"/>
<text x="82.8" y="629.3" font-size="15.5" fill="#e4e4e4" text-anchor="middle" textLength="8.8" lengthAdjust="spacingAndGlyphs">2</text>
<line x1="133.5" y1="604.6" x2="133.5" y2="611.5" stroke="#ccc" stroke-width="1.3"/>
<text x="133.5" y="629.3" font-size="15.5" fill="#e4e4e4" text-anchor="middle" textLength="8.8" lengthAdjust="spacingAndGlyphs">4</text>
<line x1="184.2" y1="604.6" x2="184.2" y2="611.5" stroke="#ccc" stroke-width="1.3"/>
<text x="184.2" y="629.3" font-size="15.5" fill="#e4e4e4" text-anchor="middle" textLength="8.8" lengthAdjust="spacingAndGlyphs">6</text>
<line x1="234.9" y1="604.6" x2="234.9" y2="611.5" stroke="#ccc" stroke-width="1.3"/>
<text x="234.9" y="629.3" font-size="15.5" fill="#e4e4e4" text-anchor="middle" textLength="8.8" lengthAdjust="spacingAndGlyphs">8</text>
<line x1="285.6" y1="604.6" x2="285.6" y2="611.5" stroke="#ccc" stroke-width="1.3"/>
<text x="286.8" y="629.3" font-size="15.5" fill="#e4e4e4" text-anchor="middle" textLength="18.3" lengthAdjust="spacingAndGlyphs">10</text>
<line x1="336.3" y1="604.6" x2="336.3" y2="611.5" stroke="#ccc" stroke-width="1.3"/>
<text x="337.5" y="629.3" font-size="15.5" fill="#e4e4e4" text-anchor="middle" textLength="18.3" lengthAdjust="spacingAndGlyphs">12</text>
<line x1="387" y1="604.6" x2="387" y2="611.5" stroke="#ccc" stroke-width="1.3"/>
<text x="388.2" y="629.3" font-size="15.5" fill="#e4e4e4" text-anchor="middle" textLength="18.3" lengthAdjust="spacingAndGlyphs">14</text>
<text x="107.3" y="676.6" font-size="33" fill="#fff" textLength="245.7" lengthAdjust="spacingAndGlyphs">Avg dE2000: 3,7</text>
<text x="103.5" y="722.9" font-size="33" fill="#fff" textLength="255.3" lengthAdjust="spacingAndGlyphs">Max dE2000: 8,8</text>
<text x="25.8" y="784.5" font-size="33" fill="#fff" textLength="249.5" lengthAdjust="spacingAndGlyphs">Current Reading</text>
<text x="25.4" y="834.3" font-size="28.5" fill="#fff" textLength="117.2" lengthAdjust="spacingAndGlyphs">x: 0,4174</text>
<text x="25.4" y="880" font-size="28.5" fill="#fff" textLength="117.6" lengthAdjust="spacingAndGlyphs">y: 0,5208</text>
<text x="25.4" y="926.8" font-size="28.5" fill="#fff" textLength="126.2" lengthAdjust="spacingAndGlyphs">fL: 121,34</text>
<text x="25.4" y="973.4" font-size="28.5" fill="#fff" textLength="181.2" lengthAdjust="spacingAndGlyphs">cd/m²: 415,73</text>
<rect x="465.2" y="118.1" width="173.6" height="382.8" fill="#222"/>
<line x1="458.2" y1="118.1" x2="465.2" y2="118.1" stroke="#ccc" stroke-width="1.3"/>
<text x="457.9" y="124.2" font-size="15.8" fill="#e4e4e4" text-anchor="end" textLength="8.7" lengthAdjust="spacingAndGlyphs">4</text>
<line x1="465.2" y1="165.95" x2="638.8" y2="165.95" stroke="#9a9a9a" stroke-width="1.3"/>
<line x1="458.2" y1="165.95" x2="465.2" y2="165.95" stroke="#ccc" stroke-width="1.3"/>
<text x="457.9" y="172.05" font-size="15.8" fill="#e4e4e4" text-anchor="end" textLength="8.7" lengthAdjust="spacingAndGlyphs">3</text>
<line x1="465.2" y1="213.8" x2="638.8" y2="213.8" stroke="#9a9a9a" stroke-width="1.3"/>
<line x1="458.2" y1="213.8" x2="465.2" y2="213.8" stroke="#ccc" stroke-width="1.3"/>
<text x="457.9" y="219.9" font-size="15.8" fill="#e4e4e4" text-anchor="end" textLength="8.7" lengthAdjust="spacingAndGlyphs">2</text>
<line x1="465.2" y1="261.65" x2="638.8" y2="261.65" stroke="#9a9a9a" stroke-width="1.3"/>
<line x1="458.2" y1="261.65" x2="465.2" y2="261.65" stroke="#ccc" stroke-width="1.3"/>
<text x="457.9" y="267.75" font-size="15.8" fill="#e4e4e4" text-anchor="end" textLength="8.7" lengthAdjust="spacingAndGlyphs">1</text>
<line x1="465.2" y1="309.5" x2="638.8" y2="309.5" stroke="#9a9a9a" stroke-width="1.3"/>
<line x1="458.2" y1="309.5" x2="465.2" y2="309.5" stroke="#ccc" stroke-width="1.3"/>
<text x="457.9" y="315.6" font-size="15.8" fill="#e4e4e4" text-anchor="end" textLength="8.7" lengthAdjust="spacingAndGlyphs">0</text>
<line x1="465.2" y1="357.35" x2="638.8" y2="357.35" stroke="#9a9a9a" stroke-width="1.3"/>
<line x1="458.2" y1="357.35" x2="465.2" y2="357.35" stroke="#ccc" stroke-width="1.3"/>
<text x="457.9" y="363.45" font-size="15.8" fill="#e4e4e4" text-anchor="end" textLength="13.6" lengthAdjust="spacingAndGlyphs">-1</text>
<line x1="465.2" y1="405.2" x2="638.8" y2="405.2" stroke="#9a9a9a" stroke-width="1.3"/>
<line x1="458.2" y1="405.2" x2="465.2" y2="405.2" stroke="#ccc" stroke-width="1.3"/>
<text x="457.9" y="411.3" font-size="15.8" fill="#e4e4e4" text-anchor="end" textLength="13.6" lengthAdjust="spacingAndGlyphs">-2</text>
<line x1="465.2" y1="453.05" x2="638.8" y2="453.05" stroke="#9a9a9a" stroke-width="1.3"/>
<line x1="458.2" y1="453.05" x2="465.2" y2="453.05" stroke="#ccc" stroke-width="1.3"/>
<text x="457.9" y="459.15" font-size="15.8" fill="#e4e4e4" text-anchor="end" textLength="13.6" lengthAdjust="spacingAndGlyphs">-3</text>
<line x1="458.2" y1="500.9" x2="465.2" y2="500.9" stroke="#ccc" stroke-width="1.3"/>
<text x="457.9" y="507" font-size="15.8" fill="#e4e4e4" text-anchor="end" textLength="13.6" lengthAdjust="spacingAndGlyphs">-4</text>
<rect x="465.2" y="118.1" width="173.6" height="382.8" fill="none" stroke="#a6a6a6" stroke-width="1.5"/>
<text x="541.5" y="112.2" font-size="16.3" fill="#dcdcdc" text-anchor="middle" textLength="52.1" lengthAdjust="spacingAndGlyphs">Delta L</text>
<rect x="481.8" y="297.06" width="138.2" height="12.44" fill="url(#g46)" stroke="#000" stroke-width="1.3"/>
<rect x="699.8" y="118.1" width="163.9" height="382.8" fill="#222"/>
<line x1="692.8" y1="118.1" x2="699.8" y2="118.1" stroke="#ccc" stroke-width="1.3"/>
<text x="692.5" y="124.2" font-size="15.8" fill="#e4e4e4" text-anchor="end" textLength="17.5" lengthAdjust="spacingAndGlyphs">10</text>
<line x1="699.8" y1="213.8" x2="863.7" y2="213.8" stroke="#9a9a9a" stroke-width="1.3"/>
<line x1="692.8" y1="213.8" x2="699.8" y2="213.8" stroke="#ccc" stroke-width="1.3"/>
<text x="692.5" y="219.9" font-size="15.8" fill="#e4e4e4" text-anchor="end" textLength="8.7" lengthAdjust="spacingAndGlyphs">5</text>
<line x1="699.8" y1="309.5" x2="863.7" y2="309.5" stroke="#9a9a9a" stroke-width="1.3"/>
<line x1="692.8" y1="309.5" x2="699.8" y2="309.5" stroke="#ccc" stroke-width="1.3"/>
<text x="692.5" y="315.6" font-size="15.8" fill="#e4e4e4" text-anchor="end" textLength="8.7" lengthAdjust="spacingAndGlyphs">0</text>
<line x1="699.8" y1="405.2" x2="863.7" y2="405.2" stroke="#9a9a9a" stroke-width="1.3"/>
<line x1="692.8" y1="405.2" x2="699.8" y2="405.2" stroke="#ccc" stroke-width="1.3"/>
<text x="692.5" y="411.3" font-size="15.8" fill="#e4e4e4" text-anchor="end" textLength="13.6" lengthAdjust="spacingAndGlyphs">-5</text>
<line x1="692.8" y1="500.9" x2="699.8" y2="500.9" stroke="#ccc" stroke-width="1.3"/>
<text x="692.5" y="507" font-size="15.8" fill="#e4e4e4" text-anchor="end" textLength="22.5" lengthAdjust="spacingAndGlyphs">-10</text>
<rect x="699.8" y="118.1" width="163.9" height="382.8" fill="none" stroke="#a6a6a6" stroke-width="1.5"/>
<text x="766.4" y="112.2" font-size="16.3" fill="#dcdcdc" text-anchor="middle" textLength="54" lengthAdjust="spacingAndGlyphs">Delta C</text>
<rect x="717.2" y="142.03" width="129.4" height="167.47" fill="url(#g47)" stroke="#000" stroke-width="1.3"/>
<rect x="915.2" y="118.1" width="173.6" height="382.8" fill="#222"/>
<line x1="908.2" y1="118.1" x2="915.2" y2="118.1" stroke="#ccc" stroke-width="1.3"/>
<text x="907.9" y="124.2" font-size="15.8" fill="#e4e4e4" text-anchor="end" textLength="8.7" lengthAdjust="spacingAndGlyphs">4</text>
<line x1="915.2" y1="165.95" x2="1088.8" y2="165.95" stroke="#9a9a9a" stroke-width="1.3"/>
<line x1="908.2" y1="165.95" x2="915.2" y2="165.95" stroke="#ccc" stroke-width="1.3"/>
<text x="907.9" y="172.05" font-size="15.8" fill="#e4e4e4" text-anchor="end" textLength="8.7" lengthAdjust="spacingAndGlyphs">3</text>
<line x1="915.2" y1="213.8" x2="1088.8" y2="213.8" stroke="#9a9a9a" stroke-width="1.3"/>
<line x1="908.2" y1="213.8" x2="915.2" y2="213.8" stroke="#ccc" stroke-width="1.3"/>
<text x="907.9" y="219.9" font-size="15.8" fill="#e4e4e4" text-anchor="end" textLength="8.7" lengthAdjust="spacingAndGlyphs">2</text>
<line x1="915.2" y1="261.65" x2="1088.8" y2="261.65" stroke="#9a9a9a" stroke-width="1.3"/>
<line x1="908.2" y1="261.65" x2="915.2" y2="261.65" stroke="#ccc" stroke-width="1.3"/>
<text x="907.9" y="267.75" font-size="15.8" fill="#e4e4e4" text-anchor="end" textLength="8.7" lengthAdjust="spacingAndGlyphs">1</text>
<line x1="915.2" y1="309.5" x2="1088.8" y2="309.5" stroke="#9a9a9a" stroke-width="1.3"/>
<line x1="908.2" y1="309.5" x2="915.2" y2="309.5" stroke="#ccc" stroke-width="1.3"/>
<text x="907.9" y="315.6" font-size="15.8" fill="#e4e4e4" text-anchor="end" textLength="8.7" lengthAdjust="spacingAndGlyphs">0</text>
<line x1="915.2" y1="357.35" x2="1088.8" y2="357.35" stroke="#9a9a9a" stroke-width="1.3"/>
<line x1="908.2" y1="357.35" x2="915.2" y2="357.35" stroke="#ccc" stroke-width="1.3"/>
<text x="907.9" y="363.45" font-size="15.8" fill="#e4e4e4" text-anchor="end" textLength="13.6" lengthAdjust="spacingAndGlyphs">-1</text>
<line x1="915.2" y1="405.2" x2="1088.8" y2="405.2" stroke="#9a9a9a" stroke-width="1.3"/>
<line x1="908.2" y1="405.2" x2="915.2" y2="405.2" stroke="#ccc" stroke-width="1.3"/>
<text x="907.9" y="411.3" font-size="15.8" fill="#e4e4e4" text-anchor="end" textLength="13.6" lengthAdjust="spacingAndGlyphs">-2</text>
<line x1="915.2" y1="453.05" x2="1088.8" y2="453.05" stroke="#9a9a9a" stroke-width="1.3"/>
<line x1="908.2" y1="453.05" x2="915.2" y2="453.05" stroke="#ccc" stroke-width="1.3"/>
<text x="907.9" y="459.15" font-size="15.8" fill="#e4e4e4" text-anchor="end" textLength="13.6" lengthAdjust="spacingAndGlyphs">-3</text>
<line x1="908.2" y1="500.9" x2="915.2" y2="500.9" stroke="#ccc" stroke-width="1.3"/>
<text x="907.9" y="507" font-size="15.8" fill="#e4e4e4" text-anchor="end" textLength="13.6" lengthAdjust="spacingAndGlyphs">-4</text>
<rect x="915.2" y="118.1" width="173.6" height="382.8" fill="none" stroke="#a6a6a6" stroke-width="1.5"/>
<text x="991.3" y="112.2" font-size="16.3" fill="#dcdcdc" text-anchor="middle" textLength="55" lengthAdjust="spacingAndGlyphs">Delta H</text>
<rect x="931.8" y="143.46" width="138.2" height="166.04" fill="url(#g48)" stroke="#000" stroke-width="1.3"/>
<rect x="436.3" y="516.5" width="674.7" height="183" fill="#000"/>
<clipPath id="swc"><rect x="436.3" y="516.5" width="674.7" height="183"/></clipPath><g clip-path="url(#swc)">
<rect x="456" y="523.7" width="67" height="67.5" fill="#f4fff4"/>
<rect x="456" y="590.5" width="67" height="67" fill="#fcfcfc"/>
<rect x="456.5" y="524.2" width="66" height="133" fill="none" stroke="#fff" stroke-opacity=".6" stroke-width="1.2"/>
<text x="489.5" y="674.3" font-size="15" fill="#fff" text-anchor="middle" textLength="37.2" lengthAdjust="spacingAndGlyphs">White</text>
<rect x="533.6" y="523.7" width="67" height="67.5" fill="#dde9df"/>
<rect x="533.6" y="590.5" width="67" height="67" fill="#e6e6e6"/>
<rect x="534.1" y="524.2" width="66" height="133" fill="none" stroke="#fff" stroke-opacity=".95" stroke-width="1.2"/>
<text x="567.1" y="674.3" font-size="15" fill="#fff" text-anchor="middle" textLength="47.8" lengthAdjust="spacingAndGlyphs">Gray 80</text>
<rect x="611.2" y="523.7" width="67" height="67.5" fill="#cbd6cc"/>
<rect x="611.2" y="590.5" width="67" height="67" fill="#d1d1d1"/>
<rect x="611.7" y="524.2" width="66" height="133" fill="none" stroke="#fff" stroke-opacity=".95" stroke-width="1.2"/>
<text x="644.7" y="674.3" font-size="15" fill="#fff" text-anchor="middle" textLength="47.3" lengthAdjust="spacingAndGlyphs">Gray 65</text>
<rect x="688.8" y="523.7" width="67" height="67.5" fill="#b1bbb1"/>
<rect x="688.8" y="590.5" width="67" height="67" fill="#bababa"/>
<rect x="689.3" y="524.2" width="66" height="133" fill="none" stroke="#fff" stroke-opacity=".95" stroke-width="1.2"/>
<text x="722.3" y="674.3" font-size="15" fill="#fff" text-anchor="middle" textLength="47.8" lengthAdjust="spacingAndGlyphs">Gray 50</text>
<rect x="766.4" y="523.7" width="67" height="67.5" fill="#969f96"/>
<rect x="766.4" y="590.5" width="67" height="67" fill="#9e9e9e"/>
<rect x="766.9" y="524.2" width="66" height="133" fill="none" stroke="#fff" stroke-opacity=".95" stroke-width="1.2"/>
<text x="799.9" y="674.3" font-size="15" fill="#fff" text-anchor="middle" textLength="47.8" lengthAdjust="spacingAndGlyphs">Gray 35</text>
<rect x="844" y="523.7" width="67" height="67.5" fill="#000"/>
<rect x="844" y="590.5" width="67" height="67" fill="#000"/>
<rect x="844.5" y="524.2" width="66" height="133" fill="none" stroke="#fff" stroke-opacity=".95" stroke-width="1.2"/>
<text x="877.5" y="674.3" font-size="15" fill="#fff" text-anchor="middle" textLength="32.3" lengthAdjust="spacingAndGlyphs">Black</text>
<rect x="921.6" y="523.7" width="67" height="67.5" fill="#74553e"/>
<rect x="921.6" y="590.5" width="67" height="67" fill="#765344"/>
<rect x="922.1" y="524.2" width="66" height="133" fill="none" stroke="#fff" stroke-opacity=".95" stroke-width="1.2"/>
<text x="955.1" y="674.3" font-size="15" fill="#fff" text-anchor="middle" textLength="57.5" lengthAdjust="spacingAndGlyphs">Dark Skin</text>
<rect x="999.2" y="523.7" width="67" height="67.5" fill="#c3987a"/>
<rect x="999.2" y="590.5" width="67" height="67" fill="#c49682"/>
<rect x="999.7" y="524.2" width="66" height="133" fill="none" stroke="#fff" stroke-opacity=".95" stroke-width="1.2"/>
<text x="1032.7" y="674.3" font-size="15" fill="#fff" text-anchor="middle" textLength="58.9" lengthAdjust="spacingAndGlyphs">Light Skin</text>
<rect x="1076.8" y="523.7" width="67" height="67.5" fill="#54809d"/>
<rect x="1076.8" y="590.5" width="67" height="67" fill="#5f7aa0"/>
<rect x="1077.3" y="524.2" width="66" height="133" fill="none" stroke="#fff" stroke-opacity=".95" stroke-width="1.2"/>
<text x="1110.3" y="674.3" font-size="15" fill="#fff" text-anchor="middle" textLength="52" lengthAdjust="spacingAndGlyphs">Blue Sky</text>
</g>
<text transform="translate(452.3,572.9) rotate(-90)" font-size="15" fill="#fff" textLength="39.5" lengthAdjust="spacingAndGlyphs">Actual</text>
<text transform="translate(452.3,647.6) rotate(-90)" font-size="15" fill="#fff" textLength="38.8" lengthAdjust="spacingAndGlyphs">Target</text>
<rect x="436.3" y="699" width="674.7" height="19" rx="3.5" fill="#636363"/>
<rect x="437.7" y="701" width="15.5" height="15" rx="3" fill="#929292"/>
<rect x="1094.1" y="701" width="15.5" height="15" rx="3" fill="#929292"/>
<path d="M448.5 703.3v10.4l-6 -5.2z" fill="#444"/>
<path d="M1098.8 703.3v10.4l6 -5.2z" fill="#444"/>
<rect x="456.7" y="701" width="180" height="15" rx="7.5" fill="#464646"/>
<rect x="376" y="736" width="1532.5" height="30.6" fill="url(#g49)"/>
<rect x="376" y="736" width="18.4" height="30.6" fill="#000"/>
<rect x="394.4" y="766.6" width="1514.1" height="29.8" fill="#414141"/>
<rect x="376" y="766.6" width="18.4" height="29.8" fill="#2b2b2b"/>
<rect x="394.4" y="796.1" width="1514.1" height="29.8" fill="#7c7c7c"/>
<rect x="376" y="796.1" width="18.4" height="29.8" fill="#242424"/>
<rect x="394.4" y="825.6" width="1514.1" height="29.8" fill="#414141"/>
<rect x="376" y="825.6" width="18.4" height="29.8" fill="#2b2b2b"/>
<rect x="394.4" y="855.1" width="1514.1" height="29.8" fill="#7c7c7c"/>
<rect x="376" y="855.1" width="18.4" height="29.8" fill="#242424"/>
<rect x="394.4" y="884.6" width="1514.1" height="29.8" fill="#414141"/>
<rect x="376" y="884.6" width="18.4" height="29.8" fill="#2b2b2b"/>
<rect x="394.4" y="914.1" width="1514.1" height="29.8" fill="#7c7c7c"/>
<rect x="376" y="914.1" width="18.4" height="29.8" fill="#242424"/>
<rect x="394.4" y="943.6" width="1514.1" height="29.8" fill="#414141"/>
<rect x="376" y="943.6" width="18.4" height="29.8" fill="#2b2b2b"/>
<clipPath id="tbc"><rect x="376" y="736" width="1532.5" height="260"/></clipPath><g clip-path="url(#tbc)" fill="#f2f2f2" font-size="17.8">
<text x="401.2" y="788.8" textLength="74.7" lengthAdjust="spacingAndGlyphs">x: CIE31</text>
<text x="401.2" y="818.3" textLength="76.2" lengthAdjust="spacingAndGlyphs">y: CIE31</text>
<text x="401.2" y="847.8" textLength="11.6" lengthAdjust="spacingAndGlyphs">Y</text>
<text x="401.2" y="877.3" textLength="136.3" lengthAdjust="spacingAndGlyphs">Target x:CIE31</text>
<text x="401.2" y="906.8" textLength="136.3" lengthAdjust="spacingAndGlyphs">Target y:CIE31</text>
<text x="401.2" y="936.3" textLength="78.6" lengthAdjust="spacingAndGlyphs">Target Y</text>
<text x="401.2" y="965.8" textLength="79.4" lengthAdjust="spacingAndGlyphs">ΔE 2000</text>
<text x="551.6" y="757.6" textLength="55" lengthAdjust="spacingAndGlyphs">White</text>
<text x="551.6" y="788.8" textLength="63.6" lengthAdjust="spacingAndGlyphs">0,3111</text>
<text x="551.6" y="818.3" textLength="63.6" lengthAdjust="spacingAndGlyphs">0,3409</text>
<text x="551.6" y="847.8" textLength="87.2" lengthAdjust="spacingAndGlyphs">444,9615</text>
<text x="551.6" y="877.3" textLength="63.6" lengthAdjust="spacingAndGlyphs">0,3127</text>
<text x="551.6" y="906.8" textLength="63.6" lengthAdjust="spacingAndGlyphs">0,3290</text>
<text x="551.6" y="936.3" textLength="87.2" lengthAdjust="spacingAndGlyphs">444,9615</text>
<text x="551.6" y="965.8" textLength="63.6" lengthAdjust="spacingAndGlyphs">8,7962</text>
<text x="653.6" y="757.6" textLength="70.1" lengthAdjust="spacingAndGlyphs">Gray 80</text>
<text x="653.6" y="788.8" textLength="63.6" lengthAdjust="spacingAndGlyphs">0,3112</text>
<text x="653.6" y="818.3" textLength="63.6" lengthAdjust="spacingAndGlyphs">0,3410</text>
<text x="653.6" y="847.8" textLength="87.2" lengthAdjust="spacingAndGlyphs">354,3771</text>
<text x="653.6" y="877.3" textLength="63.6" lengthAdjust="spacingAndGlyphs">0,3127</text>
<text x="653.6" y="906.8" textLength="63.6" lengthAdjust="spacingAndGlyphs">0,3290</text>
<text x="653.6" y="936.3" textLength="87.2" lengthAdjust="spacingAndGlyphs">352,0971</text>
<text x="653.6" y="965.8" textLength="63.6" lengthAdjust="spacingAndGlyphs">8,2499</text>
<text x="755.9" y="757.6" textLength="69.3" lengthAdjust="spacingAndGlyphs">Gray 65</text>
<text x="755.9" y="788.8" textLength="63.6" lengthAdjust="spacingAndGlyphs">0,3114</text>
<text x="755.9" y="818.3" textLength="63.6" lengthAdjust="spacingAndGlyphs">0,3411</text>
<text x="755.9" y="847.8" textLength="87.2" lengthAdjust="spacingAndGlyphs">286,5532</text>
<text x="755.9" y="877.3" textLength="63.6" lengthAdjust="spacingAndGlyphs">0,3127</text>
<text x="755.9" y="906.8" textLength="63.6" lengthAdjust="spacingAndGlyphs">0,3290</text>
<text x="755.9" y="936.3" textLength="87.2" lengthAdjust="spacingAndGlyphs">283,7060</text>
<text x="755.9" y="965.8" textLength="63.6" lengthAdjust="spacingAndGlyphs">7,7953</text>
<text x="858.3" y="757.6" textLength="69.3" lengthAdjust="spacingAndGlyphs">Gray 50</text>
<text x="858.3" y="788.8" textLength="63.6" lengthAdjust="spacingAndGlyphs">0,3114</text>
<text x="858.3" y="818.3" textLength="63.6" lengthAdjust="spacingAndGlyphs">0,3411</text>
<text x="858.3" y="847.8" textLength="87.2" lengthAdjust="spacingAndGlyphs">221,8095</text>
<text x="858.3" y="877.3" textLength="63.6" lengthAdjust="spacingAndGlyphs">0,3127</text>
<text x="858.3" y="906.8" textLength="63.6" lengthAdjust="spacingAndGlyphs">0,3290</text>
<text x="858.3" y="936.3" textLength="87.2" lengthAdjust="spacingAndGlyphs">218,4854</text>
<text x="858.3" y="965.8" textLength="63.6" lengthAdjust="spacingAndGlyphs">7,2508</text>
<text x="960.3" y="757.6" textLength="68.8" lengthAdjust="spacingAndGlyphs">Gray 35</text>
<text x="960.3" y="788.8" textLength="63.6" lengthAdjust="spacingAndGlyphs">0,3114</text>
<text x="960.3" y="818.3" textLength="63.6" lengthAdjust="spacingAndGlyphs">0,3411</text>
<text x="960.3" y="847.8" textLength="87.2" lengthAdjust="spacingAndGlyphs">155,0387</text>
<text x="960.3" y="877.3" textLength="63.6" lengthAdjust="spacingAndGlyphs">0,3127</text>
<text x="960.3" y="906.8" textLength="63.6" lengthAdjust="spacingAndGlyphs">0,3290</text>
<text x="960.3" y="936.3" textLength="87.2" lengthAdjust="spacingAndGlyphs">152,1387</text>
<text x="960.3" y="965.8" textLength="63.6" lengthAdjust="spacingAndGlyphs">6,5793</text>
<text x="1062.7" y="757.6" textLength="47.7" lengthAdjust="spacingAndGlyphs">Black</text>
<text x="1062.7" y="788.8" textLength="63.6" lengthAdjust="spacingAndGlyphs">0,2784</text>
<text x="1062.7" y="818.3" textLength="63.6" lengthAdjust="spacingAndGlyphs">0,3022</text>
<text x="1062.7" y="847.8" textLength="63.6" lengthAdjust="spacingAndGlyphs">0,2816</text>
<text x="1062.7" y="877.3" textLength="63.6" lengthAdjust="spacingAndGlyphs">0,3127</text>
<text x="1062.7" y="906.8" textLength="63.6" lengthAdjust="spacingAndGlyphs">0,3290</text>
<text x="1062.7" y="936.3" textLength="63.6" lengthAdjust="spacingAndGlyphs">0,0000</text>
<text x="1062.7" y="965.8" textLength="63.6" lengthAdjust="spacingAndGlyphs">0,4386</text>
<text x="1140.8" y="757.6" textLength="84.3" lengthAdjust="spacingAndGlyphs">Dark Skin</text>
<text x="1140.8" y="788.8" textLength="63.6" lengthAdjust="spacingAndGlyphs">0,4111</text>
<text x="1140.8" y="818.3" textLength="63.6" lengthAdjust="spacingAndGlyphs">0,3787</text>
<text x="1140.8" y="847.8" textLength="75.4" lengthAdjust="spacingAndGlyphs">44,6026</text>
<text x="1140.8" y="877.3" textLength="63.6" lengthAdjust="spacingAndGlyphs">0,4003</text>
<text x="1140.8" y="906.8" textLength="63.6" lengthAdjust="spacingAndGlyphs">0,3642</text>
<text x="1140.8" y="936.3" textLength="75.4" lengthAdjust="spacingAndGlyphs">44,8223</text>
<text x="1140.8" y="965.8" textLength="63.6" lengthAdjust="spacingAndGlyphs">3,0737</text>
<text x="1236.7" y="757.6" textLength="85.9" lengthAdjust="spacingAndGlyphs">Light Skin</text>
<text x="1236.7" y="788.8" textLength="63.6" lengthAdjust="spacingAndGlyphs">0,3823</text>
<text x="1236.7" y="818.3" textLength="63.6" lengthAdjust="spacingAndGlyphs">0,3677</text>
<text x="1236.7" y="847.8" textLength="87.2" lengthAdjust="spacingAndGlyphs">158,6910</text>
<text x="1236.7" y="877.3" textLength="63.6" lengthAdjust="spacingAndGlyphs">0,3795</text>
<text x="1236.7" y="906.8" textLength="63.6" lengthAdjust="spacingAndGlyphs">0,3562</text>
<text x="1236.7" y="936.3" textLength="87.2" lengthAdjust="spacingAndGlyphs">155,2700</text>
<text x="1236.7" y="965.8" textLength="63.6" lengthAdjust="spacingAndGlyphs">4,1586</text>
<text x="1339" y="757.6" textLength="75.3" lengthAdjust="spacingAndGlyphs">Blue Sky</text>
<text x="1339" y="788.8" textLength="63.6" lengthAdjust="spacingAndGlyphs">0,2439</text>
<text x="1339" y="818.3" textLength="63.6" lengthAdjust="spacingAndGlyphs">0,2748</text>
<text x="1339" y="847.8" textLength="75.4" lengthAdjust="spacingAndGlyphs">83,5036</text>
<text x="1339" y="877.3" textLength="63.6" lengthAdjust="spacingAndGlyphs">0,2496</text>
<text x="1339" y="906.8" textLength="63.6" lengthAdjust="spacingAndGlyphs">0,2656</text>
<text x="1339" y="936.3" textLength="75.4" lengthAdjust="spacingAndGlyphs">83,2006</text>
<text x="1339" y="965.8" textLength="63.6" lengthAdjust="spacingAndGlyphs">5,0973</text>
<text x="1429.3" y="757.6" textLength="63.6" lengthAdjust="spacingAndGlyphs">Foliage</text>
<text x="1429.3" y="788.8" textLength="63.6" lengthAdjust="spacingAndGlyphs">0,3371</text>
<text x="1429.3" y="818.3" textLength="63.6" lengthAdjust="spacingAndGlyphs">0,4492</text>
<text x="1429.3" y="847.8" textLength="75.4" lengthAdjust="spacingAndGlyphs">58,1887</text>
<text x="1429.3" y="877.3" textLength="63.6" lengthAdjust="spacingAndGlyphs">0,3395</text>
<text x="1429.3" y="906.8" textLength="63.6" lengthAdjust="spacingAndGlyphs">0,4271</text>
<text x="1429.3" y="936.3" textLength="75.4" lengthAdjust="spacingAndGlyphs">57,9894</text>
<text x="1429.3" y="965.8" textLength="63.6" lengthAdjust="spacingAndGlyphs">2,7697</text>
<text x="1519" y="757.6" textLength="106.6" lengthAdjust="spacingAndGlyphs">Blue Flower</text>
<text x="1519" y="788.8" textLength="63.6" lengthAdjust="spacingAndGlyphs">0,2665</text>
<text x="1519" y="818.3" textLength="63.6" lengthAdjust="spacingAndGlyphs">0,2615</text>
<text x="1519" y="847.8" textLength="87.2" lengthAdjust="spacingAndGlyphs">104,9580</text>
<text x="1519" y="877.3" textLength="63.6" lengthAdjust="spacingAndGlyphs">0,2681</text>
<text x="1519" y="906.8" textLength="63.6" lengthAdjust="spacingAndGlyphs">0,2525</text>
<text x="1519" y="936.3" textLength="87.2" lengthAdjust="spacingAndGlyphs">103,7583</text>
<text x="1519" y="965.8" textLength="63.6" lengthAdjust="spacingAndGlyphs">2,8322</text>
<text x="1637.3" y="757.6" textLength="115.2" lengthAdjust="spacingAndGlyphs">Bluish Green</text>
<text x="1637.3" y="788.8" textLength="63.6" lengthAdjust="spacingAndGlyphs">0,2534</text>
<text x="1637.3" y="818.3" textLength="63.6" lengthAdjust="spacingAndGlyphs">0,3765</text>
<text x="1637.3" y="847.8" textLength="87.2" lengthAdjust="spacingAndGlyphs">188,7571</text>
<text x="1637.3" y="877.3" textLength="63.6" lengthAdjust="spacingAndGlyphs">0,2626</text>
<text x="1637.3" y="906.8" textLength="63.6" lengthAdjust="spacingAndGlyphs">0,3616</text>
<text x="1637.3" y="936.3" textLength="87.2" lengthAdjust="spacingAndGlyphs">186,3188</text>
<text x="1637.3" y="965.8" textLength="63.6" lengthAdjust="spacingAndGlyphs">3,6159</text>
<text x="1763.6" y="757.6" textLength="66" lengthAdjust="spacingAndGlyphs">Orange</text>
<text x="1763.6" y="788.8" textLength="63.6" lengthAdjust="spacingAndGlyphs">0,5232</text>
<text x="1763.6" y="818.3" textLength="63.6" lengthAdjust="spacingAndGlyphs">0,4179</text>
<text x="1763.6" y="847.8" textLength="87.2" lengthAdjust="spacingAndGlyphs">128,9088</text>
<text x="1763.6" y="877.3" textLength="63.6" lengthAdjust="spacingAndGlyphs">0,5122</text>
<text x="1763.6" y="906.8" textLength="63.6" lengthAdjust="spacingAndGlyphs">0,4063</text>
<text x="1763.6" y="936.3" textLength="87.2" lengthAdjust="spacingAndGlyphs">126,1369</text>
<text x="1763.6" y="965.8" textLength="63.6" lengthAdjust="spacingAndGlyphs">3,4035</text>
<text x="1866" y="757.6" textLength="119" lengthAdjust="spacingAndGlyphs">Purplish Blue</text>
<text x="1866" y="788.8" textLength="63.6" lengthAdjust="spacingAndGlyphs">0,2094</text>
<text x="1866" y="818.3" textLength="63.6" lengthAdjust="spacingAndGlyphs">0,1940</text>
<text x="1866" y="847.8" textLength="75.4" lengthAdjust="spacingAndGlyphs">50,7205</text>
<text x="1866" y="877.3" textLength="63.6" lengthAdjust="spacingAndGlyphs">0,2160</text>
<text x="1866" y="906.8" textLength="63.6" lengthAdjust="spacingAndGlyphs">0,1923</text>
<text x="1866" y="936.3" textLength="75.4" lengthAdjust="spacingAndGlyphs">52,3601</text>
<text x="1866" y="965.8" textLength="63.6" lengthAdjust="spacingAndGlyphs">2,6105</text>
</g>
<rect x="394.4" y="973.1" width="1514.1" height="18.4" fill="#3a3a3a"/>
<rect x="394.4" y="973.1" width="1514.1" height="18.4" rx="3.5" fill="#636363"/>
<rect x="395.8" y="975.1" width="15.5" height="14.4" rx="3" fill="#929292"/>
<rect x="1891.6" y="975.1" width="15.5" height="14.4" rx="3" fill="#929292"/>
<path d="M406.6 977.1v10.4l-6 -5.2z" fill="#444"/>
<path d="M1896.3 977.1v10.4l6 -5.2z" fill="#444"/>
<rect x="418.8" y="975.1" width="660.1" height="14.4" rx="7.2" fill="#464646"/>
<g font-weight="bold" font-size="7.3" text-anchor="middle">
<rect x="1.5" y="997.4" width="53.8" height="45.4" rx="3.2" fill="url(#g50)"/>
<rect x="5.1" y="1001.4" width="46.6" height="27" rx="2.6" fill="#ffffff"/>
<rect x="5.1" y="1001.4" width="46.6" height="27" rx="2.6" fill="url(#g51)"/>
<text x="28.4" y="1039.5" fill="#2c2c2c" textLength="21.5" lengthAdjust="spacingAndGlyphs">White</text>
<rect x="57.36" y="997.4" width="53.8" height="45.4" rx="3.2" fill="url(#g50)"/>
<rect x="60.96" y="1001.4" width="46.6" height="27" rx="2.6" fill="#e6e6e6"/>
<rect x="60.96" y="1001.4" width="46.6" height="27" rx="2.6" fill="url(#g51)"/>
<text x="84.26" y="1039.5" fill="#2c2c2c" textLength="28.99" lengthAdjust="spacingAndGlyphs">Gray 80</text>
<rect x="113.22" y="997.4" width="53.8" height="45.4" rx="3.2" fill="url(#g50)"/>
<rect x="116.82" y="1001.4" width="46.6" height="27" rx="2.6" fill="#d1d1d1"/>
<rect x="116.82" y="1001.4" width="46.6" height="27" rx="2.6" fill="url(#g51)"/>
<text x="140.12" y="1039.5" fill="#2c2c2c" textLength="28.99" lengthAdjust="spacingAndGlyphs">Gray 65</text>
<rect x="169.08" y="997.4" width="53.8" height="45.4" rx="3.2" fill="url(#g50)"/>
<rect x="172.68" y="1001.4" width="46.6" height="27" rx="2.6" fill="#bababa"/>
<rect x="172.68" y="1001.4" width="46.6" height="27" rx="2.6" fill="url(#g51)"/>
<text x="195.98" y="1039.5" fill="#2c2c2c" textLength="28.99" lengthAdjust="spacingAndGlyphs">Gray 50</text>
<rect x="224.94" y="997.4" width="53.8" height="45.4" rx="3.2" fill="url(#g50)"/>
<rect x="228.54" y="1001.4" width="46.6" height="27" rx="2.6" fill="#9e9e9e"/>
<rect x="228.54" y="1001.4" width="46.6" height="27" rx="2.6" fill="url(#g51)"/>
<text x="251.84" y="1039.5" fill="#2c2c2c" textLength="28.99" lengthAdjust="spacingAndGlyphs">Gray 35</text>
<rect x="280.8" y="997.4" width="53.8" height="45.4" rx="3.2" fill="url(#g50)"/>
<rect x="284.4" y="1001.4" width="46.6" height="27" rx="2.6" fill="#000000"/>
<rect x="284.4" y="1001.4" width="46.6" height="27" rx="2.6" fill="url(#g51)"/>
<text x="307.7" y="1039.5" fill="#2c2c2c" textLength="21.08" lengthAdjust="spacingAndGlyphs">Black</text>
<rect x="336.66" y="997.4" width="53.8" height="45.4" rx="3.2" fill="url(#g50)"/>
<rect x="340.26" y="1001.4" width="46.6" height="27" rx="2.6" fill="#735244"/>
<rect x="340.26" y="1001.4" width="46.6" height="27" rx="2.6" fill="url(#g51)"/>
<text x="363.56" y="1039.5" fill="#2c2c2c" textLength="36.44" lengthAdjust="spacingAndGlyphs">Dark Skin</text>
<rect x="392.52" y="997.4" width="53.8" height="45.4" rx="3.2" fill="url(#g50)"/>
<rect x="396.12" y="1001.4" width="46.6" height="27" rx="2.6" fill="#c29682"/>
<rect x="396.12" y="1001.4" width="46.6" height="27" rx="2.6" fill="url(#g51)"/>
<text x="419.42" y="1039.5" fill="#2c2c2c" textLength="38.18" lengthAdjust="spacingAndGlyphs">Light Skin</text>
<rect x="448.38" y="997.4" width="53.8" height="45.4" rx="3.2" fill="url(#g50)"/>
<rect x="451.98" y="1001.4" width="46.6" height="27" rx="2.6" fill="#5b7a9c"/>
<rect x="451.98" y="1001.4" width="46.6" height="27" rx="2.6" fill="url(#g51)"/>
<text x="475.28" y="1039.5" fill="#2c2c2c" textLength="33.37" lengthAdjust="spacingAndGlyphs">Blue Sky</text>
<rect x="504.24" y="997.4" width="53.8" height="45.4" rx="3.2" fill="url(#g50)"/>
<rect x="507.84" y="1001.4" width="46.6" height="27" rx="2.6" fill="#5a6c40"/>
<rect x="507.84" y="1001.4" width="46.6" height="27" rx="2.6" fill="url(#g51)"/>
<text x="531.14" y="1039.5" fill="#2c2c2c" textLength="27.65" lengthAdjust="spacingAndGlyphs">Foliage</text>
<rect x="560.1" y="997.4" width="53.8" height="45.4" rx="3.2" fill="url(#g50)"/>
<rect x="563.7" y="1001.4" width="46.6" height="27" rx="2.6" fill="#8280b0"/>
<rect x="563.7" y="1001.4" width="46.6" height="27" rx="2.6" fill="url(#g51)"/>
<text x="587" y="1039.5" fill="#2c2c2c" textLength="44.77" lengthAdjust="spacingAndGlyphs">Blue Flower</text>
<rect x="615.96" y="997.4" width="53.8" height="45.4" rx="3.2" fill="url(#g50)"/>
<rect x="619.56" y="1001.4" width="46.6" height="27" rx="2.6" fill="#62beac"/>
<rect x="619.56" y="1001.4" width="46.6" height="27" rx="2.6" fill="url(#g51)"/>
<text x="642.86" y="1039.5" fill="#2c2c2c" textLength="49.16" lengthAdjust="spacingAndGlyphs">Bluish Green</text>
<rect x="671.82" y="997.4" width="53.8" height="45.4" rx="3.2" fill="url(#g50)"/>
<rect x="675.42" y="1001.4" width="46.6" height="27" rx="2.6" fill="#dc7b2d"/>
<rect x="675.42" y="1001.4" width="46.6" height="27" rx="2.6" fill="url(#g51)"/>
<text x="698.72" y="1039.5" fill="#2c2c2c" textLength="27.66" lengthAdjust="spacingAndGlyphs">Orange</text>
<rect x="727.68" y="997.4" width="53.8" height="45.4" rx="3.2" fill="url(#g50)"/>
<rect x="731.28" y="1001.4" width="46.6" height="27" rx="2.6" fill="#485ca8"/>
<rect x="731.28" y="1001.4" width="46.6" height="27" rx="2.6" fill="url(#g51)"/>
<text x="754.58" y="1039.5" fill="#2c2c2c" textLength="50.92" lengthAdjust="spacingAndGlyphs">Purplish Blue</text>
<rect x="783.54" y="997.4" width="53.8" height="45.4" rx="3.2" fill="url(#g50)"/>
<rect x="787.14" y="1001.4" width="46.6" height="27" rx="2.6" fill="#c35462"/>
<rect x="787.14" y="1001.4" width="46.6" height="27" rx="2.6" fill="url(#g51)"/>
<text x="810.44" y="1039.5" fill="#2c2c2c" textLength="52.23" lengthAdjust="spacingAndGlyphs">Moderate Red</text>
<rect x="839.4" y="997.4" width="53.8" height="45.4" rx="3.2" fill="url(#g50)"/>
<rect x="843" y="1001.4" width="46.6" height="27" rx="2.6" fill="#5b3b6b"/>
<rect x="843" y="1001.4" width="46.6" height="27" rx="2.6" fill="url(#g51)"/>
<text x="866.3" y="1039.5" fill="#2c2c2c" textLength="24.58" lengthAdjust="spacingAndGlyphs">Purple</text>
<rect x="895.26" y="997.4" width="53.8" height="45.4" rx="3.2" fill="url(#g50)"/>
<rect x="898.86" y="1001.4" width="46.6" height="27" rx="2.6" fill="#a0bd3e"/>
<rect x="898.86" y="1001.4" width="46.6" height="27" rx="2.6" fill="url(#g51)"/>
<text x="922.16" y="1039.5" fill="#2c2c2c" textLength="49.61" lengthAdjust="spacingAndGlyphs">Yellow Green</text>
<rect x="951.12" y="997.4" width="53.8" height="45.4" rx="3.2" fill="url(#g50)"/>
<rect x="954.72" y="1001.4" width="46.6" height="27" rx="2.6" fill="#e5a12e"/>
<rect x="954.72" y="1001.4" width="46.6" height="27" rx="2.6" fill="url(#g51)"/>
<text x="978.02" y="1039.5" fill="#2c2c2c" textLength="52.5" lengthAdjust="spacingAndGlyphs">Orange Yellow</text>
<rect x="1006.98" y="997.4" width="53.8" height="45.4" rx="3.2" fill="url(#g50)"/>
<rect x="1010.58" y="1001.4" width="46.6" height="27" rx="2.6" fill="#2b3e93"/>
<rect x="1010.58" y="1001.4" width="46.6" height="27" rx="2.6" fill="url(#g51)"/>
<text x="1033.88" y="1039.5" fill="#2c2c2c" textLength="17.12" lengthAdjust="spacingAndGlyphs">Blue</text>
<rect x="1062.84" y="997.4" width="53.8" height="45.4" rx="3.2" fill="url(#g50)"/>
<rect x="1066.44" y="1001.4" width="46.6" height="27" rx="2.6" fill="#479548"/>
<rect x="1066.44" y="1001.4" width="46.6" height="27" rx="2.6" fill="url(#g51)"/>
<text x="1089.74" y="1039.5" fill="#2c2c2c" textLength="22.83" lengthAdjust="spacingAndGlyphs">Green</text>
<rect x="1118.7" y="997.4" width="53.8" height="45.4" rx="3.2" fill="url(#g50)"/>
<rect x="1122.3" y="1001.4" width="46.6" height="27" rx="2.6" fill="#b03038"/>
<rect x="1122.3" y="1001.4" width="46.6" height="27" rx="2.6" fill="url(#g51)"/>
<text x="1145.6" y="1039.5" fill="#2c2c2c" textLength="14.92" lengthAdjust="spacingAndGlyphs">Red</text>
<rect x="1174.56" y="997.4" width="53.8" height="45.4" rx="3.2" fill="url(#g50)"/>
<rect x="1178.16" y="1001.4" width="46.6" height="27" rx="2.6" fill="#eec816"/>
<rect x="1178.16" y="1001.4" width="46.6" height="27" rx="2.6" fill="url(#g51)"/>
<text x="1201.46" y="1039.5" fill="#2c2c2c" textLength="24.59" lengthAdjust="spacingAndGlyphs">Yellow</text>
<rect x="1230.42" y="997.4" width="53.8" height="45.4" rx="3.2" fill="url(#g50)"/>
<rect x="1234.02" y="1001.4" width="46.6" height="27" rx="2.6" fill="#bc5496"/>
<rect x="1234.02" y="1001.4" width="46.6" height="27" rx="2.6" fill="url(#g51)"/>
<text x="1257.32" y="1039.5" fill="#2c2c2c" textLength="32.04" lengthAdjust="spacingAndGlyphs">Magenta</text>
<rect x="1286.28" y="997.4" width="53.8" height="45.4" rx="3.2" fill="url(#g50)"/>
<rect x="1289.88" y="1001.4" width="46.6" height="27" rx="2.6" fill="#0089a6"/>
<rect x="1289.88" y="1001.4" width="46.6" height="27" rx="2.6" fill="url(#g51)"/>
<text x="1313.18" y="1039.5" fill="#2c2c2c" textLength="19.32" lengthAdjust="spacingAndGlyphs">Cyan</text>
<rect x="1342.14" y="997.4" width="53.8" height="45.4" rx="3.2" fill="url(#g50)"/>
<rect x="1345.74" y="1001.4" width="46.6" height="27" rx="2.6" fill="#ff0000"/>
<rect x="1345.74" y="1001.4" width="46.6" height="27" rx="2.6" fill="url(#g51)"/>
<text x="1369.04" y="1039.5" fill="#2c2c2c" textLength="37.32" lengthAdjust="spacingAndGlyphs">100% Red</text>
<rect x="1398" y="997.4" width="53.8" height="45.4" rx="3.2" fill="url(#g50)"/>
<rect x="1401.6" y="1001.4" width="46.6" height="27" rx="2.6" fill="#00ff00"/>
<rect x="1401.6" y="1001.4" width="46.6" height="27" rx="2.6" fill="url(#g51)"/>
<text x="1424.9" y="1039.5" fill="#2c2c2c" textLength="45.23" lengthAdjust="spacingAndGlyphs">100% Green</text>
<rect x="1453.86" y="997.4" width="53.8" height="45.4" rx="3.2" fill="url(#g50)"/>
<rect x="1457.46" y="1001.4" width="46.6" height="27" rx="2.6" fill="#0000ff"/>
<rect x="1457.46" y="1001.4" width="46.6" height="27" rx="2.6" fill="url(#g51)"/>
<text x="1480.76" y="1039.5" fill="#2c2c2c" textLength="39.52" lengthAdjust="spacingAndGlyphs">100% Blue</text>
<rect x="1509.72" y="997.4" width="53.8" height="45.4" rx="3.2" fill="url(#g50)"/>
<rect x="1513.32" y="1001.4" width="46.6" height="27" rx="2.6" fill="#00ffff"/>
<rect x="1513.32" y="1001.4" width="46.6" height="27" rx="2.6" fill="url(#g51)"/>
<text x="1536.62" y="1039.5" fill="#2c2c2c" textLength="41.72" lengthAdjust="spacingAndGlyphs">100% Cyan</text>
<rect x="1565.58" y="997.4" width="53.8" height="45.4" rx="3.2" fill="url(#g50)"/>
<rect x="1569.18" y="1001.4" width="46.6" height="18" rx="2.6" fill="#ff00ff"/>
<rect x="1569.18" y="1001.4" width="46.6" height="18" rx="2.6" fill="url(#g51)"/>
<text x="1576.58" y="1030.6" fill="#2c2c2c" text-anchor="start" textLength="20.2" lengthAdjust="spacingAndGlyphs">100%</text>
<text x="1576.58" y="1039.4" fill="#2c2c2c" text-anchor="start" textLength="32.04" lengthAdjust="spacingAndGlyphs">Magenta</text>
<rect x="1621.44" y="997.4" width="53.8" height="45.4" rx="3.2" fill="#262626"/>
<rect x="1625.04" y="1001.4" width="46.6" height="27" rx="2.6" fill="#ffff00"/>
<text x="1648.34" y="1039.5" fill="#fff" textLength="46.84" lengthAdjust="spacingAndGlyphs">100% Yellow</text>
</g>
<rect x="1678" y="997.4" width="35.6" height="13.4" rx="2.5" fill="url(#g52)"/>
<circle cx="1695.7" cy="1003.8" r="5.6" fill="url(#g54)"/><path d="M1692.6 1005.6h6.2l-3.1-3.3z" fill="#3a3a3a"/>
<rect x="1678" y="1012" width="35.6" height="34" rx="2.5" fill="url(#g52)"/>
<rect x="1685.3" y="1017.2" width="20.6" height="20.4" rx="3" fill="url(#g52)" stroke="#1c1c1c" stroke-width="1.8"/>
<rect x="1690.8" y="1022.5" width="10.4" height="9.8" fill="#000"/>
<rect x="1715.5" y="997.4" width="33.5" height="21.8" rx="2" fill="url(#g52)"/>
<circle cx="1731.7" cy="1008.3" r="7.3" fill="url(#g54)"/>
<rect x="1750" y="997.4" width="32.8" height="21.8" rx="2" fill="url(#g52)"/>
<circle cx="1766.2" cy="1008.3" r="7.3" fill="url(#g54)"/>
<rect x="1783.8" y="997.4" width="32.4" height="21.8" rx="2" fill="url(#g52)"/>
<circle cx="1799.5" cy="1008.3" r="7.3" fill="url(#g54)"/>
<rect x="1817.2" y="997.4" width="32.3" height="21.8" rx="2" fill="url(#g52)"/>
<circle cx="1833.3" cy="1008.3" r="7.3" fill="url(#g54)"/>
<rect x="1850.5" y="997.4" width="33.2" height="21.8" rx="2" fill="url(#g53)"/>
<circle cx="1867.2" cy="1008.3" r="7.3" fill="url(#g55)"/>
<rect x="1884.7" y="997.4" width="36.8" height="21.8" rx="2" fill="url(#g53)"/>
<circle cx="1901.7" cy="1008.3" r="7.3" fill="url(#g55)"/>
<rect x="1728.6" y="1005.2" width="6.2" height="6.2" fill="#2e2e2e"/>
<path d="M1763.7 1004.2v8.4l6.4-4.2z" fill="#2e2e2e"/>
<path d="M1797.6 1004.6h-1.9v7.4h1.9m3.8-7.4h1.9v7.4h-1.9" fill="none" stroke="#2e2e2e" stroke-width="1.3"/><path d="M1797.8 1008.3h3.4" stroke="#2e2e2e" stroke-width="1.2" stroke-dasharray="1 .9"/>
<path d="M1833.3 1008.3c-1.4-2.6-5-2.6-5 0s3.6 2.6 5 0c1.4-2.6 5-2.6 5 0s-3.6 2.6-5 0z" fill="none" stroke="#2e2e2e" stroke-width="1.3"/>
<path d="M1863.6 1007.2a3.8 3.8 0 0 1 6.8-1.4m.4 3.6a3.8 3.8 0 0 1-6.8 1.4" fill="none" stroke="#1a1a1a" stroke-width="1.6"/><path d="M1871.6 1004.4v2.8h-2.8zM1862.8 1012.2v-2.8h2.8z" fill="#1a1a1a"/>
<rect x="1715.5" y="1020.8" width="100.7" height="26" rx="2.5" fill="url(#g52)"/>
<rect x="1817.2" y="1020.8" width="106" height="26" rx="2.5" fill="url(#g52)"/>
<circle cx="1737.5" cy="1032.2" r="7" fill="url(#g54)"/><circle cx="1897.8" cy="1032.2" r="7" fill="url(#g54)"/>
<path d="M1737 1029.2l-2.6 3 2.6 3m3.2-6l-2.6 3 2.6 3" fill="none" stroke="#333" stroke-width="1.2"/>
<path d="M1895.2 1029.2l2.6 3-2.6 3m3.2-6l2.6 3-2.6 3" fill="none" stroke="#333" stroke-width="1.2"/>
<text x="1757.5" y="1038" font-size="16.6" fill="#333" textLength="37.8" lengthAdjust="spacingAndGlyphs" stroke="#333" stroke-width=".5">Back</text>
<text x="1837.5" y="1038" font-size="16.6" fill="#333" textLength="39.2" lengthAdjust="spacingAndGlyphs" stroke="#333" stroke-width=".5">Next</text>
</svg>
</body></html>
